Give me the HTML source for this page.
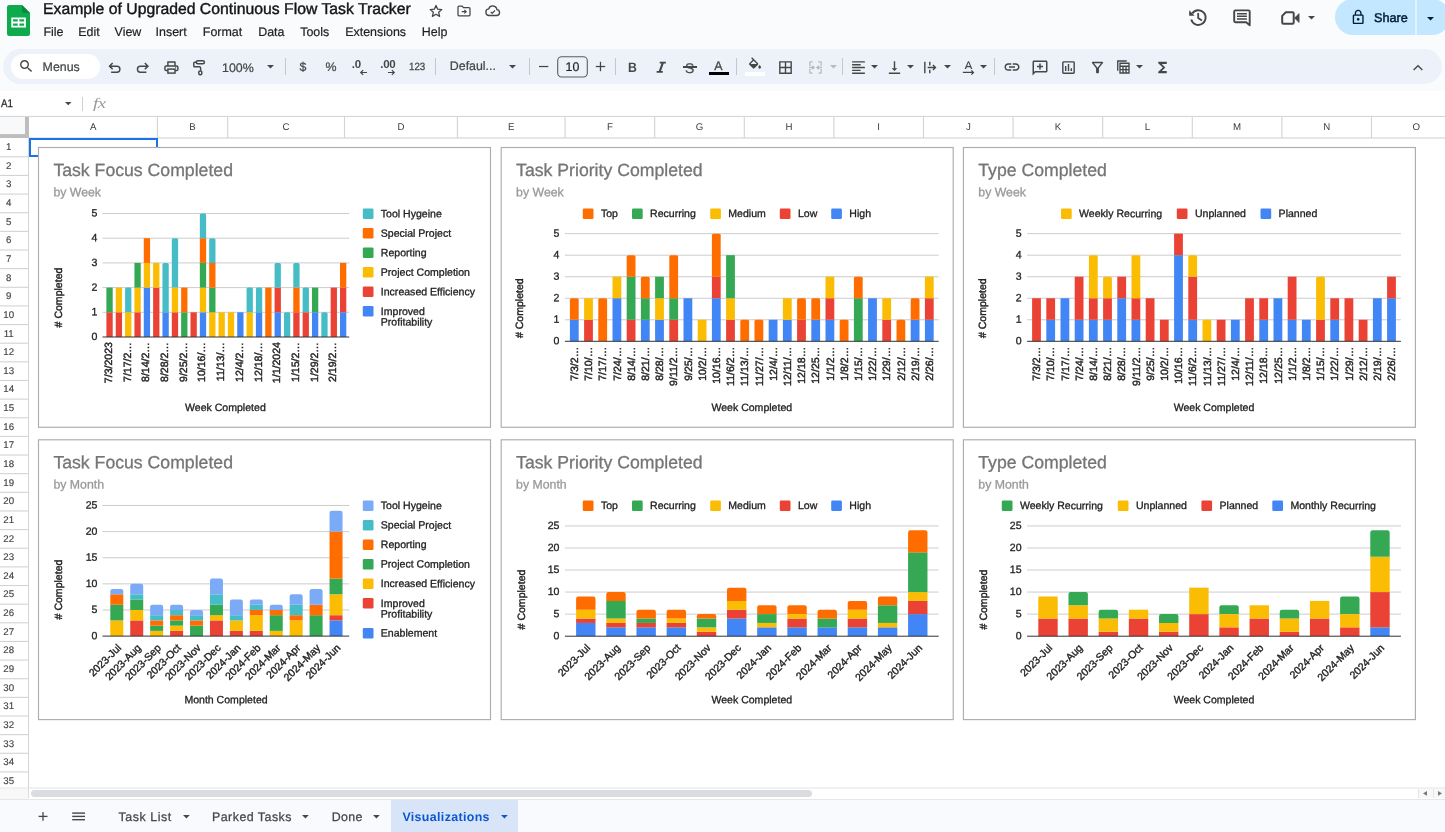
<!DOCTYPE html>
<html><head><meta charset="utf-8"><title>Example of Upgraded Continuous Flow Task Tracker</title>
<style>
html,body{margin:0;padding:0;background:#fff}
body{width:1445px;height:832px;position:relative;overflow:hidden;font-family:"Liberation Sans", sans-serif}
svg{display:block;overflow:visible}
svg text{font-family:"Liberation Sans", sans-serif;text-rendering:geometricPrecision}
div{text-rendering:geometricPrecision}
</style></head><body>
<div id="root" style="position:absolute;left:0;top:0;width:1445px;height:832px;will-change:transform;transform:translateZ(0)">
<div style="position:absolute;left:0;top:0;width:1445px;height:91px;background:#f9fbfd"></div>
<svg style="position:absolute;left:7px;top:5px" width="23" height="31" viewBox="0 0 23 31">
<path d="M2.2 0H15l8 8v20.8a2.2 2.2 0 0 1-2.2 2.2H2.2A2.2 2.2 0 0 1 0 28.800V2.2A2.200 2.200 0 0 1 2.200 0z" fill="#0dab4c"/>
<path d="M15 0l8 8h-5.800A2.200 2.200 0 0 1 15 5.800z" fill="#0a8a3f"/>
<path d="M4.300 12.400h14.600v10.200H4.300zM6.100 14.200v2.400h4.600v-2.400zM12.400 14.200v2.400h4.700v-2.400zM6.100 18.400v2.400h4.600v-2.400zM12.400 18.400v2.400h4.700v-2.400z" fill="#fff" fill-rule="evenodd"/>
</svg>
<div style="position:absolute;left:43px;top:1.32px;font-size:15.78px;line-height:18.131px;color:#151515;font-weight:400;white-space:nowrap;-webkit-text-stroke:0.400px #151515">Example of Upgraded Continuous Flow Task Tracker</div>
<svg style="position:absolute;left:427.9px;top:2.6px" width="16" height="16" viewBox="0 0 24 24" ><path d="M12 3.600l2.500 5.700 6.200.55-4.700 4.100 1.400 6.100L12 16.800 6.600 20.050l1.400-6.100-4.700-4.100 6.200-.55z" fill="none" stroke="#444746" stroke-width="1.900" stroke-linejoin="round"/></svg>
<svg style="position:absolute;left:456.3px;top:2.6px" width="16" height="16" viewBox="0 0 24 24" ><path d="M3 6.200a1.500 1.500 0 0 1 1.500-1.500h4.700l2 2.300h8.300A1.500 1.500 0 0 1 21 8.500v9.300a1.500 1.500 0 0 1-1.500 1.500h-15A1.500 1.500 0 0 1 3 17.800z" fill="none" stroke="#444746" stroke-width="1.900"/><path d="M8.500 13h6.500M12.600 10.300l2.700 2.700-2.700 2.700" fill="none" stroke="#444746" stroke-width="1.700"/></svg>
<svg style="position:absolute;left:483.85px;top:1.85px" width="17.5" height="17.5" viewBox="0 0 24 24" ><path d="M7 18.500a4.500 4.500 0 0 1-.6-8.950A5.800 5.800 0 0 1 17.700 10.500 4.050 4.050 0 0 1 18 18.500z" fill="none" stroke="#444746" stroke-width="1.800" stroke-linejoin="round"/><path d="M9.200 13.600l2 2 3.800-3.900" fill="none" stroke="#444746" stroke-width="1.700"/></svg>
<div style="position:absolute;left:43.5px;top:24.93px;font-size:12.45px;line-height:14.305px;color:#1f1f1f;font-weight:400;white-space:nowrap;-webkit-text-stroke:0.200px #1f1f1f">File</div>
<div style="position:absolute;left:78.2px;top:24.93px;font-size:12.45px;line-height:14.305px;color:#1f1f1f;font-weight:400;white-space:nowrap;-webkit-text-stroke:0.200px #1f1f1f">Edit</div>
<div style="position:absolute;left:114.6px;top:24.93px;font-size:12.45px;line-height:14.305px;color:#1f1f1f;font-weight:400;white-space:nowrap;-webkit-text-stroke:0.200px #1f1f1f">View</div>
<div style="position:absolute;left:155.6px;top:24.93px;font-size:12.45px;line-height:14.305px;color:#1f1f1f;font-weight:400;white-space:nowrap;-webkit-text-stroke:0.200px #1f1f1f">Insert</div>
<div style="position:absolute;left:202.8px;top:24.93px;font-size:12.45px;line-height:14.305px;color:#1f1f1f;font-weight:400;white-space:nowrap;-webkit-text-stroke:0.200px #1f1f1f">Format</div>
<div style="position:absolute;left:258.2px;top:24.93px;font-size:12.45px;line-height:14.305px;color:#1f1f1f;font-weight:400;white-space:nowrap;-webkit-text-stroke:0.200px #1f1f1f">Data</div>
<div style="position:absolute;left:300.2px;top:24.93px;font-size:12.45px;line-height:14.305px;color:#1f1f1f;font-weight:400;white-space:nowrap;-webkit-text-stroke:0.200px #1f1f1f">Tools</div>
<div style="position:absolute;left:345.2px;top:24.93px;font-size:12.45px;line-height:14.305px;color:#1f1f1f;font-weight:400;white-space:nowrap;-webkit-text-stroke:0.200px #1f1f1f">Extensions</div>
<div style="position:absolute;left:421.8px;top:24.93px;font-size:12.45px;line-height:14.305px;color:#1f1f1f;font-weight:400;white-space:nowrap;-webkit-text-stroke:0.200px #1f1f1f">Help</div>
<svg style="position:absolute;left:0;top:0" width="1445" height="40" viewBox="0 0 1445 40"><path d="M1192.32 13.41A7.3 7.3 0 1 1 1191.25 19.49" fill="none" stroke="#444746" stroke-width="1.9"/><path d="M1189.2 10.3V15.8H1194.6Z" fill="#444746"/><path d="M1198.2 12.9V18.1L1201.9 20.6" fill="none" stroke="#444746" stroke-width="1.8"/><path d="M1234.2 11.6Q1234.2 10.4 1235.4 10.4H1248.5Q1249.7 10.4 1249.7 11.600V25.200L1246.200 22.200H1235.400Q1234.200 22.200 1234.200 21Z" fill="none" stroke="#444746" stroke-width="1.9" stroke-linejoin="round"/><path d="M1237 13.700H1246.900M1237 16.300H1246.900M1237 18.900H1246.900" stroke="#444746" stroke-width="1.500"/><path d="M1285.800 12.300H1292.500Q1293.700 12.300 1293.700 13.500V22.600Q1293.700 23.800 1292.500 23.800H1283.400Q1282.200 23.800 1282.200 22.600V15.900Z" fill="none" stroke="#444746" stroke-width="2" stroke-linejoin="round"/><path d="M1294.500 18.050L1299.100 13.600V22.500Z" fill="#444746" stroke="#444746" stroke-width="0.600" stroke-linejoin="round"/></svg>
<svg style="position:absolute;left:1307.9px;top:16.05px" width="7" height="3.5" viewBox="0 0 10 5"><path d="M0 0h10L5 5z" fill="#444746"/></svg>
<div style="position:absolute;left:1335.400px;top:-0.600px;width:114.500px;height:36px;border-radius:18px;background:#c2e7ff"></div>
<div style="position:absolute;left:1415.400px;top:0;width:1.500px;height:35.400px;background:#e2f2ff"></div>
<svg style="position:absolute;left:1350.2px;top:8.8px" width="16.4" height="16.4" viewBox="0 0 24 24" ><path d="M18 8h-1V6c0-2.760-2.240-5-5-5S7 3.240 7 6v2H6c-1.100 0-2 .9-2 2v10c0 1.100.9 2 2 2h12c1.100 0 2-.9 2-2V10c0-1.100-.9-2-2-2zM9 6c0-1.660 1.340-3 3-3s3 1.340 3 3v2H9V6zm9 14H6V10h12v10zm-6-3c1.100 0 2-.9 2-2s-.9-2-2-2-2 .9-2 2 .9 2 2 2z" fill="#001d35"/></svg>
<div style="position:absolute;left:1374px;top:10.51px;font-size:12.7px;line-height:14.592px;color:#001d35;font-weight:400;white-space:nowrap;-webkit-text-stroke:0.450px #001d35">Share</div>
<svg style="position:absolute;left:1427.4px;top:16.65px" width="7" height="3.7" viewBox="0 0 10 5"><path d="M0 0h10L5 5z" fill="#001d35"/></svg>
<div style="position:absolute;left:3px;top:49px;width:1439px;height:35px;border-radius:17.500px;background:#edf2fa"></div>
<div style="position:absolute;left:11px;top:54px;width:88.500px;height:24.500px;border-radius:12.250px;background:#fff"></div>
<svg style="position:absolute;left:18.35px;top:58.35px" width="16.5" height="16.5" viewBox="0 0 24 24" ><path d="M15.500 14h-.79l-.28-.27A6.471 6.471 0 0 0 16 9.500 6.500 6.500 0 1 0 9.500 16c1.610 0 3.090-.59 4.230-1.570l.27.280v.79l5 4.990L20.490 19l-4.990-5zm-6 0C7.010 14 5 11.990 5 9.500S7.010 5 9.500 5 14 7.010 14 9.500 11.990 14 9.500 14z" fill="#444746"/></svg>
<div style="position:absolute;left:42.6px;top:59.98px;font-size:12.4px;line-height:14.248px;color:#444746;font-weight:400;white-space:nowrap;-webkit-text-stroke:0.220px #444746">Menus</div>
<svg style="position:absolute;left:0;top:0" width="1445" height="92" viewBox="0 0 1445 92"><path d="M112.65 63.1L109.45 66.3L112.65 69.15M109.6 66.3H116.95A2.95 2.95 0 0 1 116.95 72.2H111.1" fill="none" stroke="#444746" stroke-width="1.45" stroke-linejoin="round"/><path d="M144.8 63.1L148.05 66.3L144.8 69.15M147.9 66.3H140.4A2.95 2.95 0 0 0 140.4 72.2H146.4" fill="none" stroke="#444746" stroke-width="1.45" stroke-linejoin="round"/><path d="M167.9 65.9V62H175V65.9" fill="none" stroke="#444746" stroke-width="1.45" stroke-linejoin="round"/><rect x="164.9" y="66" width="13" height="4.5" rx="1.3" fill="none" stroke="#444746" stroke-width="1.45" stroke-linejoin="round"/><rect x="167.9" y="69.1" width="7.1" height="4" fill="#edf2fa" stroke="#444746" stroke-width="1.45"/><circle cx="175.7" cy="67.6" r="0.6" fill="#444746"/><rect x="196.3" y="60.8" width="8.1" height="3" rx="1.5" fill="none" stroke="#444746" stroke-width="1.45" stroke-linejoin="round"/><path d="M196.3 62.3H194.6Q193.8 62.3 193.8 63.1V66Q193.8 66.8 194.6 66.8H199.2Q200.65 66.8 200.65 68.3V70.6" fill="none" stroke="#444746" stroke-width="1.45" stroke-linejoin="round"/><rect x="198.8" y="70.9" width="3" height="3.8" rx="1.2" fill="none" stroke="#444746" stroke-width="1.45" stroke-linejoin="round"/></svg>
<div style="position:absolute;left:222px;top:60.98px;font-size:12.4px;line-height:14.248px;color:#444746;font-weight:400;white-space:nowrap;-webkit-text-stroke:0.220px #444746">100%</div>
<svg style="position:absolute;left:266.5px;top:64.85px" width="7" height="3.5" viewBox="0 0 10 5"><path d="M0 0h10L5 5z" fill="#444746"/></svg>
<div style="position:absolute;left:285px;top:58px;width:1px;height:17px;background:#c7c7c7"></div>
<div style="position:absolute;left:299.4px;top:60.08px;font-size:12.4px;line-height:14.248px;color:#444746;font-weight:400;white-space:nowrap;-webkit-text-stroke:0.220px #444746">$</div>
<div style="position:absolute;left:325.6px;top:60.08px;font-size:12.4px;line-height:14.248px;color:#444746;font-weight:400;white-space:nowrap;-webkit-text-stroke:0.220px #444746">%</div>
<div style="position:absolute;left:351.8px;top:59.09px;font-size:11.5px;line-height:13.213px;color:#444746;font-weight:700;white-space:nowrap;letter-spacing:-0.300px">.0</div>
<svg style="position:absolute;left:360.1px;top:68.6px" width="7" height="7" viewBox="0 0 10 10" ><path d="M10 5H1.500M4.500 1.500L1 5l3.500 3.500" fill="none" stroke="#444746" stroke-width="1.700"/></svg>
<div style="position:absolute;left:380.3px;top:59.09px;font-size:11.5px;line-height:13.213px;color:#444746;font-weight:700;white-space:nowrap;letter-spacing:-0.300px">.00</div>
<svg style="position:absolute;left:388px;top:68.5px" width="7" height="7" viewBox="0 0 10 10" ><path d="M0 5h8.500M5.500 1.500L9 5 5.500 8.500" fill="none" stroke="#444746" stroke-width="1.700"/></svg>
<div style="position:absolute;left:409px;top:61.2px;font-size:10.5px;line-height:12.065px;color:#444746;font-weight:400;white-space:nowrap;-webkit-text-stroke:0.250px #444746;transform:scaleX(0.930);transform-origin:0 0">123</div>
<div style="position:absolute;left:434.9px;top:58px;width:1px;height:17px;background:#c7c7c7"></div>
<div style="position:absolute;left:449.8px;top:59.48px;font-size:12.4px;line-height:14.248px;color:#444746;font-weight:400;white-space:nowrap;-webkit-text-stroke:0.220px #444746">Defaul...</div>
<svg style="position:absolute;left:508.5px;top:64.85px" width="7" height="3.5" viewBox="0 0 10 5"><path d="M0 0h10L5 5z" fill="#444746"/></svg>
<div style="position:absolute;left:529px;top:58px;width:1px;height:17px;background:#c7c7c7"></div>
<svg style="position:absolute;left:0;top:50px" width="700" height="34" viewBox="0 50 700 34"><rect x="539" y="65.9" width="9.3" height="1.25" fill="#444746"/><rect x="595.8" y="65.9" width="9.4" height="1.25" fill="#444746"/><rect x="599.85" y="61.800" width="1.25" height="9.400" fill="#444746"/><rect x="557.700" y="56.700" width="29.600" height="20.300" rx="4" fill="none" stroke="#5a5c5b" stroke-width="1.100"/></svg>
<div style="position:absolute;left:565.6px;top:60.08px;font-size:12.4px;line-height:14.248px;color:#1f1f1f;font-weight:400;white-space:nowrap;-webkit-text-stroke:0.200px #1f1f1f">10</div>
<div style="position:absolute;left:614.9px;top:58px;width:1px;height:17px;background:#c7c7c7"></div>
<div style="position:absolute;left:628.2px;top:59.69px;font-size:13.6px;line-height:15.626px;color:#444746;font-weight:700;white-space:nowrap;transform:scaleX(0.900);transform-origin:0 0">B</div>
<svg style="position:absolute;left:652.05px;top:58.25px" width="18.5" height="18.5" viewBox="0 0 24 24" ><path d="M10 5v2.200h2.300l-3.500 9.600H6V19h8v-2.200h-2.300l3.500-9.600H18V5z" fill="#444746"/></svg>
<div style="position:absolute;left:685px;top:59.73px;font-size:14px;line-height:16.086px;color:#444746;font-weight:400;white-space:nowrap;-webkit-text-stroke:0.200px #444746">S</div>
<div style="position:absolute;left:682.800px;top:66.300px;width:14px;height:1.300px;background:#444746"></div>
<div style="position:absolute;left:714.3px;top:58.98px;font-size:12.4px;line-height:14.248px;color:#444746;font-weight:400;white-space:nowrap;-webkit-text-stroke:0.300px #444746">A</div>
<div style="position:absolute;left:708.600px;top:71.800px;width:20.700px;height:3.600px;background:#000"></div>
<div style="position:absolute;left:736.3px;top:58px;width:1px;height:17px;background:#c7c7c7"></div>
<svg style="position:absolute;left:746.6px;top:55.6px" width="16" height="16" viewBox="0 0 24 24" ><path d="M16.560 8.940L7.620 0 6.210 1.410l2.380 2.380-5.150 5.150a1.490 1.490 0 0 0 0 2.120l5.500 5.500c.29.290.68.440 1.060.440s.77-.150 1.060-.440l5.500-5.500c.59-.58.59-1.530 0-2.120zM5.210 10L10 5.210 14.790 10H5.210zM19 11.500s-2 2.170-2 3.500c0 1.100.9 2 2 2s2-.9 2-2c0-1.330-2-3.500-2-3.500z" fill="#444746" transform="translate(0 2)"/></svg>
<div style="position:absolute;left:745px;top:72px;width:20.200px;height:3.500px;background:#fff"></div>
<svg style="position:absolute;left:776.5px;top:58.5px" width="17" height="17" viewBox="0 0 24 24" ><path d="M3 3v18h18V3H3zm8 16H5v-6h6v6zm0-8H5V5h6v6zm8 8h-6v-6h6v6zm0-8h-6V5h6v6z" fill="#444746"/></svg>
<svg style="position:absolute;left:806.5px;top:58.5px" width="17" height="17" viewBox="0 0 24 24" ><path d="M4 4v6M4 14v6M20 4v6M20 14v6M4 4h4M16 4h4M4 20h4M16 20h4M3 12h7M7.500 9.500L10 12l-2.500 2.500M21 12h-7M16.500 9.500L14 12l2.500 2.500" fill="none" stroke="#b6b9bd" stroke-width="1.800"/></svg>
<svg style="position:absolute;left:829.5px;top:64.85px" width="7" height="3.5" viewBox="0 0 10 5"><path d="M0 0h10L5 5z" fill="#b6b9bd"/></svg>
<div style="position:absolute;left:841.9px;top:58px;width:1px;height:17px;background:#c7c7c7"></div>
<svg style="position:absolute;left:849.5px;top:58.5px" width="17" height="17" viewBox="0 0 24 24" ><path d="M3 21h18v-2H3v2zm0-4h12v-2H3v2zm0-4h18v-2H3v2zm0-4h12V7H3v2zm0-6v2h18V3H3z" fill="#444746"/></svg>
<svg style="position:absolute;left:870.9px;top:64.85px" width="7" height="3.5" viewBox="0 0 10 5"><path d="M0 0h10L5 5z" fill="#444746"/></svg>
<svg style="position:absolute;left:886.1px;top:58.5px" width="17" height="17" viewBox="0 0 24 24" ><path d="M16 13h-3V3h-2v10H8l4 4 4-4zM4 19v2h16v-2H4z" fill="#444746"/></svg>
<svg style="position:absolute;left:907.1px;top:64.85px" width="7" height="3.5" viewBox="0 0 10 5"><path d="M0 0h10L5 5z" fill="#444746"/></svg>
<svg style="position:absolute;left:921.5px;top:58.5px" width="17" height="17" viewBox="0 0 24 24" ><path d="M4 4v16M11 4v5M11 15v5M8 12h11M15.500 8.500L19 12l-3.500 3.500" fill="none" stroke="#444746" stroke-width="2"/></svg>
<svg style="position:absolute;left:943.5px;top:64.85px" width="7" height="3.5" viewBox="0 0 10 5"><path d="M0 0h10L5 5z" fill="#444746"/></svg>
<svg style="position:absolute;left:959.5px;top:58.5px" width="17" height="17" viewBox="0 0 24 24" ><path d="M12.750 3h-1.500L6.500 14h2.100l.9-2.200h5l.9 2.200h2.100L12.750 3zm-2.620 7L12 4.980 13.870 10h-3.740z" fill="#444746"/><path d="M4 19h15M16 16l3 3-3 3" fill="none" stroke="#444746" stroke-width="1.800"/></svg>
<svg style="position:absolute;left:980px;top:64.85px" width="7" height="3.5" viewBox="0 0 10 5"><path d="M0 0h10L5 5z" fill="#444746"/></svg>
<div style="position:absolute;left:993.9px;top:58px;width:1px;height:17px;background:#c7c7c7"></div>
<svg style="position:absolute;left:1002.8px;top:58px" width="18" height="18" viewBox="0 0 24 24" ><path d="M3.900 12c0-1.710 1.390-3.100 3.100-3.100h4V7H7c-2.760 0-5 2.240-5 5s2.240 5 5 5h4v-1.900H7c-1.710 0-3.100-1.390-3.100-3.100zM8 13h8v-2H8v2zm9-6h-4v1.900h4c1.710 0 3.100 1.390 3.100 3.100s-1.390 3.100-3.100 3.100h-4V17h4c2.760 0 5-2.240 5-5s-2.240-5-5-5z" fill="#444746"/></svg>
<svg style="position:absolute;left:1031px;top:58.6px" width="18" height="18" viewBox="0 0 24 24" ><path d="M20 2H4c-1.100 0-2 .9-2 2v18l4-4h14c1.100 0 2-.9 2-2V4c0-1.100-.9-2-2-2zm0 14H5.170L4 17.170V4h16v12zM11 14h2v-3h3V9h-3V6h-2v3H8v2h3z" fill="#444746"/></svg>
<svg style="position:absolute;left:1059.9px;top:58.5px" width="17" height="17" viewBox="0 0 24 24" ><path d="M19 3H5c-1.100 0-2 .9-2 2v14c0 1.100.9 2 2 2h14c1.100 0 2-.9 2-2V5c0-1.100-.9-2-2-2zm0 16H5V5h14v14zM7 10h2v7H7zm4-3h2v10h-2zm4 6h2v4h-2z" fill="#444746"/></svg>
<svg style="position:absolute;left:1088.5px;top:58.7px" width="17" height="17" viewBox="0 0 24 24" ><path d="M4.250 5.610C6.270 8.200 10 13 10 13v6c0 .55.45 1 1 1h2c.55 0 1-.45 1-1v-6s3.720-4.800 5.740-7.390A.998.998 0 0 0 18.950 4H5.040a1 1 0 0 0-.79 1.610zM7.040 6h9.920L12 12.320 7.040 6z" fill="#444746" transform="translate(0 0)"/></svg>
<svg style="position:absolute;left:1114px;top:58.2px" width="18" height="18" viewBox="0 0 24 24" ><path d="M8 7h12v13H8zM8 11h12M8 15.500h12M12 11v9M16 11v9" fill="none" stroke="#444746" stroke-width="1.800"/><path d="M5 17V4h12" fill="none" stroke="#444746" stroke-width="1.800"/></svg>
<svg style="position:absolute;left:1136.1px;top:64.85px" width="7" height="3.5" viewBox="0 0 10 5"><path d="M0 0h10L5 5z" fill="#444746"/></svg>
<svg style="position:absolute;left:1153.5px;top:58.5px" width="17" height="17" viewBox="0 0 24 24" ><path d="M18 4H6v2l6.500 6L6 18v2h12v-3h-7l5-5-5-5h7V4z" fill="#444746"/></svg>
<svg style="position:absolute;left:1410.6px;top:60.6px" width="14" height="14" viewBox="0 0 24 24" ><path d="M4.500 15.500L12 8l7.500 7.500" fill="none" stroke="#444746" stroke-width="2.300"/></svg>
<div style="position:absolute;left:0;top:91px;width:1445px;height:25.500px;background:#fff"></div>
<div style="position:absolute;left:0.8px;top:98.25px;font-size:11px;line-height:12.639px;color:#1f1f1f;font-weight:400;white-space:nowrap;transform:scaleX(0.890);transform-origin:0 0;-webkit-text-stroke:0.250px #1f1f1f">A1</div>
<svg style="position:absolute;left:65.05px;top:102.05px" width="6.5" height="3.3" viewBox="0 0 10 5"><path d="M0 0h10L5 5z" fill="#444746"/></svg>
<div style="position:absolute;left:82px;top:97px;width:1px;height:14px;background:#d0d0d0"></div>
<div style="position:absolute;left:93.2px;top:95.88px;font-size:14.5px;line-height:16.660px;color:#959ba1;font-weight:400;white-space:nowrap;font-family:'Liberation Serif',serif;letter-spacing:-0.300px;transform:scaleX(1.300);transform-origin:0 0"><i>fx</i></div>
<div style="position:absolute;left:0;top:117px;width:1445px;height:21px;background:#fff"></div>
<div style="position:absolute;left:83.2px;top:122.300px;width:20px;text-align:center;font-size:9.700px;line-height:12px;color:#3c4043">A</div>
<div style="position:absolute;left:182.55px;top:122.300px;width:20px;text-align:center;font-size:9.700px;line-height:12px;color:#3c4043">B</div>
<div style="position:absolute;left:276.1px;top:122.300px;width:20px;text-align:center;font-size:9.700px;line-height:12px;color:#3c4043">C</div>
<div style="position:absolute;left:390.95px;top:122.300px;width:20px;text-align:center;font-size:9.700px;line-height:12px;color:#3c4043">D</div>
<div style="position:absolute;left:501.25px;top:122.300px;width:20px;text-align:center;font-size:9.700px;line-height:12px;color:#3c4043">E</div>
<div style="position:absolute;left:599.9px;top:122.300px;width:20px;text-align:center;font-size:9.700px;line-height:12px;color:#3c4043">F</div>
<div style="position:absolute;left:689.5px;top:122.300px;width:20px;text-align:center;font-size:9.700px;line-height:12px;color:#3c4043">G</div>
<div style="position:absolute;left:779.1px;top:122.300px;width:20px;text-align:center;font-size:9.700px;line-height:12px;color:#3c4043">H</div>
<div style="position:absolute;left:868.7px;top:122.300px;width:20px;text-align:center;font-size:9.700px;line-height:12px;color:#3c4043">I</div>
<div style="position:absolute;left:958.3px;top:122.300px;width:20px;text-align:center;font-size:9.700px;line-height:12px;color:#3c4043">J</div>
<div style="position:absolute;left:1047.9px;top:122.300px;width:20px;text-align:center;font-size:9.700px;line-height:12px;color:#3c4043">K</div>
<div style="position:absolute;left:1137.5px;top:122.300px;width:20px;text-align:center;font-size:9.700px;line-height:12px;color:#3c4043">L</div>
<div style="position:absolute;left:1227.1px;top:122.300px;width:20px;text-align:center;font-size:9.700px;line-height:12px;color:#3c4043">M</div>
<div style="position:absolute;left:1316.7px;top:122.300px;width:20px;text-align:center;font-size:9.700px;line-height:12px;color:#3c4043">N</div>
<div style="position:absolute;left:1406.3px;top:122.300px;width:20px;text-align:center;font-size:9.700px;line-height:12px;color:#3c4043">O</div>
<svg style="position:absolute;left:0;top:0" width="1445" height="140" viewBox="0 0 1445 140"><rect x="0" y="115.9" width="1445" height="1.1" fill="#d6d6d6"/><rect x="29" y="137.45" width="1416" height="1.1" fill="#d3d3d3"/><rect x="0" y="117" width="29" height="21" fill="#bdbdbd"/><rect x="0" y="117" width="25" height="17.1" fill="#f8f9fa"/><rect x="156.85" y="117" width="1.1" height="21" fill="#d3d3d3"/><rect x="227.15" y="117" width="1.1" height="21" fill="#d3d3d3"/><rect x="343.95" y="117" width="1.1" height="21" fill="#d3d3d3"/><rect x="456.85" y="117" width="1.1" height="21" fill="#d3d3d3"/><rect x="564.55" y="117" width="1.1" height="21" fill="#d3d3d3"/><rect x="654.15" y="117" width="1.1" height="21" fill="#d3d3d3"/><rect x="743.75" y="117" width="1.1" height="21" fill="#d3d3d3"/><rect x="833.35" y="117" width="1.1" height="21" fill="#d3d3d3"/><rect x="922.95" y="117" width="1.1" height="21" fill="#d3d3d3"/><rect x="1012.55" y="117" width="1.1" height="21" fill="#d3d3d3"/><rect x="1102.15" y="117" width="1.1" height="21" fill="#d3d3d3"/><rect x="1191.75" y="117" width="1.1" height="21" fill="#d3d3d3"/><rect x="1281.35" y="117" width="1.1" height="21" fill="#d3d3d3"/><rect x="1370.95" y="117" width="1.1" height="21" fill="#d3d3d3"/></svg>
<div style="position:absolute;left:28.300px;top:138px;width:1px;height:650px;background:#d5d5d5"></div>
<div style="position:absolute;left:-1.300px;top:142.1px;width:20px;text-align:center;font-size:9.700px;line-height:12px;color:#444;-webkit-text-stroke:0.150px #444">1</div>
<div style="position:absolute;left:-1.300px;top:160.74px;width:20px;text-align:center;font-size:9.700px;line-height:12px;color:#444;-webkit-text-stroke:0.150px #444">2</div>
<div style="position:absolute;left:-1.300px;top:179.38px;width:20px;text-align:center;font-size:9.700px;line-height:12px;color:#444;-webkit-text-stroke:0.150px #444">3</div>
<div style="position:absolute;left:-1.300px;top:198.02px;width:20px;text-align:center;font-size:9.700px;line-height:12px;color:#444;-webkit-text-stroke:0.150px #444">4</div>
<div style="position:absolute;left:-1.300px;top:216.66px;width:20px;text-align:center;font-size:9.700px;line-height:12px;color:#444;-webkit-text-stroke:0.150px #444">5</div>
<div style="position:absolute;left:-1.300px;top:235.3px;width:20px;text-align:center;font-size:9.700px;line-height:12px;color:#444;-webkit-text-stroke:0.150px #444">6</div>
<div style="position:absolute;left:-1.300px;top:253.94px;width:20px;text-align:center;font-size:9.700px;line-height:12px;color:#444;-webkit-text-stroke:0.150px #444">7</div>
<div style="position:absolute;left:-1.300px;top:272.58px;width:20px;text-align:center;font-size:9.700px;line-height:12px;color:#444;-webkit-text-stroke:0.150px #444">8</div>
<div style="position:absolute;left:-1.300px;top:291.22px;width:20px;text-align:center;font-size:9.700px;line-height:12px;color:#444;-webkit-text-stroke:0.150px #444">9</div>
<div style="position:absolute;left:-1.300px;top:309.86px;width:20px;text-align:center;font-size:9.700px;line-height:12px;color:#444;-webkit-text-stroke:0.150px #444">10</div>
<div style="position:absolute;left:-1.300px;top:328.5px;width:20px;text-align:center;font-size:9.700px;line-height:12px;color:#444;-webkit-text-stroke:0.150px #444">11</div>
<div style="position:absolute;left:-1.300px;top:347.14px;width:20px;text-align:center;font-size:9.700px;line-height:12px;color:#444;-webkit-text-stroke:0.150px #444">12</div>
<div style="position:absolute;left:-1.300px;top:365.78px;width:20px;text-align:center;font-size:9.700px;line-height:12px;color:#444;-webkit-text-stroke:0.150px #444">13</div>
<div style="position:absolute;left:-1.300px;top:384.42px;width:20px;text-align:center;font-size:9.700px;line-height:12px;color:#444;-webkit-text-stroke:0.150px #444">14</div>
<div style="position:absolute;left:-1.300px;top:403.06px;width:20px;text-align:center;font-size:9.700px;line-height:12px;color:#444;-webkit-text-stroke:0.150px #444">15</div>
<div style="position:absolute;left:-1.300px;top:421.7px;width:20px;text-align:center;font-size:9.700px;line-height:12px;color:#444;-webkit-text-stroke:0.150px #444">16</div>
<div style="position:absolute;left:-1.300px;top:440.34px;width:20px;text-align:center;font-size:9.700px;line-height:12px;color:#444;-webkit-text-stroke:0.150px #444">17</div>
<div style="position:absolute;left:-1.300px;top:458.98px;width:20px;text-align:center;font-size:9.700px;line-height:12px;color:#444;-webkit-text-stroke:0.150px #444">18</div>
<div style="position:absolute;left:-1.300px;top:477.62px;width:20px;text-align:center;font-size:9.700px;line-height:12px;color:#444;-webkit-text-stroke:0.150px #444">19</div>
<div style="position:absolute;left:-1.300px;top:496.26px;width:20px;text-align:center;font-size:9.700px;line-height:12px;color:#444;-webkit-text-stroke:0.150px #444">20</div>
<div style="position:absolute;left:-1.300px;top:514.9px;width:20px;text-align:center;font-size:9.700px;line-height:12px;color:#444;-webkit-text-stroke:0.150px #444">21</div>
<div style="position:absolute;left:-1.300px;top:533.54px;width:20px;text-align:center;font-size:9.700px;line-height:12px;color:#444;-webkit-text-stroke:0.150px #444">22</div>
<div style="position:absolute;left:-1.300px;top:552.18px;width:20px;text-align:center;font-size:9.700px;line-height:12px;color:#444;-webkit-text-stroke:0.150px #444">23</div>
<div style="position:absolute;left:-1.300px;top:570.82px;width:20px;text-align:center;font-size:9.700px;line-height:12px;color:#444;-webkit-text-stroke:0.150px #444">24</div>
<div style="position:absolute;left:-1.300px;top:589.46px;width:20px;text-align:center;font-size:9.700px;line-height:12px;color:#444;-webkit-text-stroke:0.150px #444">25</div>
<div style="position:absolute;left:-1.300px;top:608.1px;width:20px;text-align:center;font-size:9.700px;line-height:12px;color:#444;-webkit-text-stroke:0.150px #444">26</div>
<div style="position:absolute;left:-1.300px;top:626.74px;width:20px;text-align:center;font-size:9.700px;line-height:12px;color:#444;-webkit-text-stroke:0.150px #444">27</div>
<div style="position:absolute;left:-1.300px;top:645.38px;width:20px;text-align:center;font-size:9.700px;line-height:12px;color:#444;-webkit-text-stroke:0.150px #444">28</div>
<div style="position:absolute;left:-1.300px;top:664.02px;width:20px;text-align:center;font-size:9.700px;line-height:12px;color:#444;-webkit-text-stroke:0.150px #444">29</div>
<div style="position:absolute;left:-1.300px;top:682.66px;width:20px;text-align:center;font-size:9.700px;line-height:12px;color:#444;-webkit-text-stroke:0.150px #444">30</div>
<div style="position:absolute;left:-1.300px;top:701.3px;width:20px;text-align:center;font-size:9.700px;line-height:12px;color:#444;-webkit-text-stroke:0.150px #444">31</div>
<div style="position:absolute;left:-1.300px;top:719.94px;width:20px;text-align:center;font-size:9.700px;line-height:12px;color:#444;-webkit-text-stroke:0.150px #444">32</div>
<div style="position:absolute;left:-1.300px;top:738.58px;width:20px;text-align:center;font-size:9.700px;line-height:12px;color:#444;-webkit-text-stroke:0.150px #444">33</div>
<div style="position:absolute;left:-1.300px;top:757.22px;width:20px;text-align:center;font-size:9.700px;line-height:12px;color:#444;-webkit-text-stroke:0.150px #444">34</div>
<div style="position:absolute;left:-1.300px;top:775.86px;width:20px;text-align:center;font-size:9.700px;line-height:12px;color:#444;-webkit-text-stroke:0.150px #444">35</div>
<svg style="position:absolute;left:0;top:0" width="30" height="800" viewBox="0 0 30 800"><rect x="0" y="156.25" width="28.5" height="1.1" fill="#d3d3d3"/><rect x="0" y="174.89" width="28.5" height="1.1" fill="#d3d3d3"/><rect x="0" y="193.53" width="28.5" height="1.1" fill="#d3d3d3"/><rect x="0" y="212.17" width="28.5" height="1.1" fill="#d3d3d3"/><rect x="0" y="230.81" width="28.5" height="1.1" fill="#d3d3d3"/><rect x="0" y="249.45" width="28.5" height="1.1" fill="#d3d3d3"/><rect x="0" y="268.09" width="28.5" height="1.1" fill="#d3d3d3"/><rect x="0" y="286.73" width="28.5" height="1.1" fill="#d3d3d3"/><rect x="0" y="305.37" width="28.5" height="1.1" fill="#d3d3d3"/><rect x="0" y="324.01" width="28.5" height="1.1" fill="#d3d3d3"/><rect x="0" y="342.65" width="28.5" height="1.1" fill="#d3d3d3"/><rect x="0" y="361.29" width="28.5" height="1.1" fill="#d3d3d3"/><rect x="0" y="379.93" width="28.5" height="1.1" fill="#d3d3d3"/><rect x="0" y="398.57" width="28.5" height="1.1" fill="#d3d3d3"/><rect x="0" y="417.21" width="28.5" height="1.1" fill="#d3d3d3"/><rect x="0" y="435.85" width="28.5" height="1.1" fill="#d3d3d3"/><rect x="0" y="454.49" width="28.5" height="1.1" fill="#d3d3d3"/><rect x="0" y="473.13" width="28.5" height="1.1" fill="#d3d3d3"/><rect x="0" y="491.77" width="28.5" height="1.1" fill="#d3d3d3"/><rect x="0" y="510.41" width="28.5" height="1.1" fill="#d3d3d3"/><rect x="0" y="529.05" width="28.5" height="1.1" fill="#d3d3d3"/><rect x="0" y="547.69" width="28.5" height="1.1" fill="#d3d3d3"/><rect x="0" y="566.33" width="28.5" height="1.1" fill="#d3d3d3"/><rect x="0" y="584.97" width="28.5" height="1.1" fill="#d3d3d3"/><rect x="0" y="603.61" width="28.5" height="1.1" fill="#d3d3d3"/><rect x="0" y="622.25" width="28.5" height="1.1" fill="#d3d3d3"/><rect x="0" y="640.89" width="28.5" height="1.1" fill="#d3d3d3"/><rect x="0" y="659.53" width="28.5" height="1.1" fill="#d3d3d3"/><rect x="0" y="678.17" width="28.5" height="1.1" fill="#d3d3d3"/><rect x="0" y="696.81" width="28.5" height="1.1" fill="#d3d3d3"/><rect x="0" y="715.45" width="28.5" height="1.1" fill="#d3d3d3"/><rect x="0" y="734.09" width="28.5" height="1.1" fill="#d3d3d3"/><rect x="0" y="752.73" width="28.5" height="1.1" fill="#d3d3d3"/><rect x="0" y="771.37" width="28.5" height="1.1" fill="#d3d3d3"/><rect x="0" y="790.01" width="28.5" height="1.1" fill="#d3d3d3"/></svg>
<div style="position:absolute;left:28.800px;top:137.700px;width:129.200px;height:19.500px;border:2px solid #1a73e8;box-sizing:border-box"></div>
<div style="position:absolute;left:0;top:787px;width:1445px;height:12.500px;background:#fff"></div>
<div style="position:absolute;left:0;top:787px;width:28.500px;height:12px;background:#f8f8f8"></div>
<div style="position:absolute;left:0;top:787px;width:1445px;height:2px;background:#f1f1f1"></div>
<div style="position:absolute;left:28.200px;top:787px;width:1.300px;height:11px;background:#dcdcdc"></div>
<div style="position:absolute;left:31.100px;top:790px;width:781.400px;height:7px;border-radius:3.500px;background:#dadce0"></div>
<div style="position:absolute;left:1418.400px;top:788.700px;width:26.600px;height:9.500px;background:#f8f8f8"></div>
<div style="position:absolute;left:1418px;top:788.700px;width:1px;height:9.500px;background:#e6e6e6"></div><div style="position:absolute;left:1432.500px;top:788.700px;width:1.300px;height:9.500px;background:#e6e6e6"></div>
<svg style="position:absolute;left:1423.200px;top:791px;width:4px;height:4.800px" viewBox="0 0 4 6" preserveAspectRatio="none"><path d="M4 0v6L0 3z" fill="#777"/></svg>
<svg style="position:absolute;left:1438.200px;top:791px;width:4px;height:4.800px" viewBox="0 0 4 6" preserveAspectRatio="none"><path d="M0 0v6l4-3z" fill="#777"/></svg>
<div style="position:absolute;left:0;top:799.500px;width:1445px;height:33px;background:#f8fafd"></div>
<div style="position:absolute;left:0;top:798.800px;width:1445px;height:1.200px;background:#e4e6e8"></div>
<div style="position:absolute;left:391.100px;top:799.800px;width:126.800px;height:32.500px;background:#d8e4f7"></div>
<svg style="position:absolute;left:30px;top:805px" width="70" height="25" viewBox="30 805 70 25"><rect x="38.600" y="815.750" width="8.900" height="1.300" fill="#444746"/><rect x="42.350" y="812.100" width="1.300" height="8.700" fill="#444746"/><rect x="72.200" y="812.400" width="12.800" height="1.400" fill="#444746"/><rect x="72.200" y="815.700" width="12.800" height="1.400" fill="#444746"/><rect x="72.200" y="819" width="12.800" height="1.400" fill="#444746"/></svg>
<div style="position:absolute;left:118.6px;top:810.18px;font-size:12.4px;line-height:14.248px;color:#444746;font-weight:400;white-space:nowrap;-webkit-text-stroke:0.250px #444746;letter-spacing:0.550px">Task List</div>
<svg style="position:absolute;left:182.6px;top:815.3px" width="6.8" height="3.4" viewBox="0 0 10 5"><path d="M0 0h10L5 5z" fill="#444746"/></svg>
<div style="position:absolute;left:212px;top:810.18px;font-size:12.4px;line-height:14.248px;color:#444746;font-weight:400;white-space:nowrap;-webkit-text-stroke:0.250px #444746;letter-spacing:0.480px">Parked Tasks</div>
<svg style="position:absolute;left:302.2px;top:815.3px" width="6.8" height="3.4" viewBox="0 0 10 5"><path d="M0 0h10L5 5z" fill="#444746"/></svg>
<div style="position:absolute;left:331.7px;top:810.18px;font-size:12.4px;line-height:14.248px;color:#444746;font-weight:400;white-space:nowrap;-webkit-text-stroke:0.250px #444746;letter-spacing:0.400px">Done</div>
<svg style="position:absolute;left:373.1px;top:815.3px" width="6.8" height="3.4" viewBox="0 0 10 5"><path d="M0 0h10L5 5z" fill="#444746"/></svg>
<div style="position:absolute;left:402.4px;top:810.18px;font-size:12.4px;line-height:14.248px;color:#0b57d0;font-weight:700;white-space:nowrap;letter-spacing:0.360px">Visualizations</div>
<svg style="position:absolute;left:500.6px;top:815.3px" width="6.8" height="3.4" viewBox="0 0 10 5"><path d="M0 0h10L5 5z" fill="#0b57d0"/></svg>
<svg width="1445" height="832" viewBox="0 0 1445 832" style="position:absolute;left:0;top:0" font-family='"Liberation Sans", sans-serif'>
<rect x="38.5" y="147.5" width="452" height="279.8" fill="#fff" stroke="#adadad" stroke-width="1.15"/>
<text transform="translate(53.4 175.9) rotate(0.03)" font-size="17.67" fill="#757575" stroke="#757575" stroke-width="0.3">Task Focus Completed</text>
<text transform="translate(53.4 196.3) rotate(0.03)" font-size="12.3" fill="#999" stroke="#999" stroke-width="0.3">by Week</text>
<text transform="translate(97.4 340.05) rotate(0.03)" font-size="10.55" fill="#222" stroke="#222" stroke-width="0.3" text-anchor="end">0</text>
<rect x="102.5" y="311.8" width="246.7" height="1" fill="#ccc"/>
<text transform="translate(97.4 315.35) rotate(0.03)" font-size="10.55" fill="#222" stroke="#222" stroke-width="0.3" text-anchor="end">1</text>
<rect x="102.5" y="287.1" width="246.7" height="1" fill="#ccc"/>
<text transform="translate(97.4 290.65) rotate(0.03)" font-size="10.55" fill="#222" stroke="#222" stroke-width="0.3" text-anchor="end">2</text>
<rect x="102.5" y="262.4" width="246.7" height="1" fill="#ccc"/>
<text transform="translate(97.4 265.95) rotate(0.03)" font-size="10.55" fill="#222" stroke="#222" stroke-width="0.3" text-anchor="end">3</text>
<rect x="102.5" y="237.7" width="246.7" height="1" fill="#ccc"/>
<text transform="translate(97.4 241.25) rotate(0.03)" font-size="10.55" fill="#222" stroke="#222" stroke-width="0.3" text-anchor="end">4</text>
<rect x="102.5" y="213" width="246.7" height="1" fill="#ccc"/>
<text transform="translate(97.4 216.55) rotate(0.03)" font-size="10.55" fill="#222" stroke="#222" stroke-width="0.3" text-anchor="end">5</text>
<rect x="106.4" y="312.3" width="6.3" height="24.7" fill="#ea4335"/>
<rect x="106.4" y="287.6" width="6.3" height="24.7" fill="#34a853"/>
<rect x="115.74" y="312.3" width="6.3" height="24.7" fill="#ea4335"/>
<rect x="115.74" y="287.6" width="6.3" height="24.7" fill="#fbbc04"/>
<rect x="125.09" y="312.3" width="6.3" height="24.7" fill="#fbbc04"/>
<path d="M125.09 312.3V289.1Q125.09 287.6 126.59 287.6H129.89Q131.39 287.6 131.39 289.1V312.3Z" fill="#46bdc6"/>
<rect x="134.43" y="312.3" width="6.3" height="24.7" fill="#ea4335"/>
<rect x="134.43" y="287.6" width="6.3" height="24.7" fill="#fbbc04"/>
<rect x="134.43" y="262.9" width="6.3" height="24.7" fill="#34a853"/>
<rect x="143.78" y="287.6" width="6.3" height="49.4" fill="#4285f4"/>
<rect x="143.78" y="262.9" width="6.3" height="24.7" fill="#fbbc04"/>
<rect x="143.78" y="238.2" width="6.3" height="24.7" fill="#ff6d01"/>
<rect x="153.12" y="287.6" width="6.3" height="49.4" fill="#ea4335"/>
<rect x="153.12" y="262.9" width="6.3" height="24.7" fill="#fbbc04"/>
<rect x="162.46" y="312.3" width="6.3" height="24.7" fill="#4285f4"/>
<path d="M162.46 312.3V264.4Q162.46 262.9 163.96 262.9H167.26Q168.76 262.9 168.76 264.4V312.3Z" fill="#46bdc6"/>
<rect x="171.81" y="312.3" width="6.3" height="24.7" fill="#ea4335"/>
<rect x="171.81" y="287.6" width="6.3" height="24.7" fill="#fbbc04"/>
<path d="M171.81 287.6V239.7Q171.81 238.2 173.31 238.2H176.61Q178.11 238.2 178.11 239.7V287.6Z" fill="#46bdc6"/>
<rect x="181.15" y="312.3" width="6.3" height="24.7" fill="#34a853"/>
<rect x="181.15" y="287.6" width="6.3" height="24.7" fill="#ff6d01"/>
<rect x="190.5" y="312.3" width="6.3" height="24.7" fill="#ea4335"/>
<rect x="199.84" y="312.3" width="6.3" height="24.7" fill="#4285f4"/>
<rect x="199.84" y="287.6" width="6.3" height="24.7" fill="#fbbc04"/>
<rect x="199.84" y="262.9" width="6.3" height="24.7" fill="#34a853"/>
<rect x="199.84" y="238.2" width="6.3" height="24.7" fill="#ff6d01"/>
<path d="M199.84 238.2V215Q199.84 213.5 201.34 213.5H204.64Q206.14 213.5 206.14 215V238.2Z" fill="#46bdc6"/>
<rect x="209.18" y="312.3" width="6.3" height="24.7" fill="#fbbc04"/>
<rect x="209.18" y="287.6" width="6.3" height="24.7" fill="#34a853"/>
<rect x="209.18" y="262.9" width="6.3" height="24.7" fill="#ff6d01"/>
<path d="M209.18 262.9V239.7Q209.18 238.2 210.68 238.2H213.98Q215.48 238.2 215.48 239.7V262.9Z" fill="#46bdc6"/>
<rect x="218.53" y="312.3" width="6.3" height="24.7" fill="#fbbc04"/>
<rect x="227.87" y="312.3" width="6.3" height="24.7" fill="#fbbc04"/>
<rect x="237.22" y="312.3" width="6.3" height="24.7" fill="#4285f4"/>
<rect x="246.56" y="312.3" width="6.3" height="24.7" fill="#fbbc04"/>
<path d="M246.56 312.3V289.1Q246.56 287.6 248.06 287.6H251.36Q252.86 287.6 252.86 289.1V312.3Z" fill="#46bdc6"/>
<rect x="255.9" y="312.3" width="6.3" height="24.7" fill="#4285f4"/>
<path d="M255.9 312.3V289.1Q255.9 287.6 257.4 287.6H260.7Q262.2 287.6 262.2 289.1V312.3Z" fill="#46bdc6"/>
<rect x="265.25" y="287.6" width="6.3" height="49.4" fill="#ff6d01"/>
<rect x="274.59" y="312.3" width="6.3" height="24.7" fill="#4285f4"/>
<rect x="274.59" y="287.6" width="6.3" height="24.7" fill="#ea4335"/>
<path d="M274.59 287.6V264.4Q274.59 262.9 276.09 262.9H279.39Q280.89 262.9 280.89 264.4V287.6Z" fill="#46bdc6"/>
<path d="M283.94 337V313.8Q283.94 312.3 285.44 312.3H288.74Q290.24 312.3 290.24 313.8V337Z" fill="#46bdc6"/>
<rect x="293.28" y="312.3" width="6.3" height="24.7" fill="#ea4335"/>
<rect x="293.28" y="287.6" width="6.3" height="24.7" fill="#ff6d01"/>
<path d="M293.28 287.6V264.4Q293.28 262.9 294.78 262.9H298.08Q299.58 262.9 299.58 264.4V287.6Z" fill="#46bdc6"/>
<rect x="302.62" y="312.3" width="6.3" height="24.7" fill="#ea4335"/>
<path d="M302.62 312.3V289.1Q302.62 287.6 304.12 287.6H307.42Q308.92 287.6 308.92 289.1V312.3Z" fill="#46bdc6"/>
<rect x="311.97" y="312.3" width="6.3" height="24.7" fill="#4285f4"/>
<rect x="311.97" y="287.6" width="6.3" height="24.7" fill="#34a853"/>
<path d="M321.31 337V313.8Q321.31 312.3 322.81 312.3H326.11Q327.61 312.3 327.61 313.8V337Z" fill="#46bdc6"/>
<rect x="330.66" y="287.6" width="6.3" height="49.4" fill="#ea4335"/>
<rect x="340" y="312.3" width="6.3" height="24.7" fill="#4285f4"/>
<rect x="340" y="287.6" width="6.3" height="24.7" fill="#ea4335"/>
<rect x="340" y="262.9" width="6.3" height="24.7" fill="#ff6d01"/>
<rect x="102.5" y="336.5" width="246.7" height="1" fill="#333"/>
<text transform="translate(112.05 342.1) rotate(-90)" font-size="10.55" fill="#222" stroke="#222" stroke-width="0.42" text-anchor="end">7/3/2023</text>
<text transform="translate(130.74 342.1) rotate(-90)" font-size="10.55" fill="#222" stroke="#222" stroke-width="0.42" text-anchor="end">7/17/2…</text>
<text transform="translate(149.43 342.1) rotate(-90)" font-size="10.55" fill="#222" stroke="#222" stroke-width="0.42" text-anchor="end">8/14/2…</text>
<text transform="translate(168.11 342.1) rotate(-90)" font-size="10.55" fill="#222" stroke="#222" stroke-width="0.42" text-anchor="end">8/28/2…</text>
<text transform="translate(186.8 342.1) rotate(-90)" font-size="10.55" fill="#222" stroke="#222" stroke-width="0.42" text-anchor="end">9/25/2…</text>
<text transform="translate(205.49 342.1) rotate(-90)" font-size="10.55" fill="#222" stroke="#222" stroke-width="0.42" text-anchor="end">10/16/…</text>
<text transform="translate(224.18 342.1) rotate(-90)" font-size="10.55" fill="#222" stroke="#222" stroke-width="0.42" text-anchor="end">11/13/…</text>
<text transform="translate(242.87 342.1) rotate(-90)" font-size="10.55" fill="#222" stroke="#222" stroke-width="0.42" text-anchor="end">12/4/2…</text>
<text transform="translate(261.55 342.1) rotate(-90)" font-size="10.55" fill="#222" stroke="#222" stroke-width="0.42" text-anchor="end">12/18/…</text>
<text transform="translate(280.24 342.1) rotate(-90)" font-size="10.55" fill="#222" stroke="#222" stroke-width="0.42" text-anchor="end">1/1/2024</text>
<text transform="translate(298.93 342.1) rotate(-90)" font-size="10.55" fill="#222" stroke="#222" stroke-width="0.42" text-anchor="end">1/15/2…</text>
<text transform="translate(317.62 342.1) rotate(-90)" font-size="10.55" fill="#222" stroke="#222" stroke-width="0.42" text-anchor="end">1/29/2…</text>
<text transform="translate(336.31 342.1) rotate(-90)" font-size="10.55" fill="#222" stroke="#222" stroke-width="0.42" text-anchor="end">2/19/2…</text>
<text transform="translate(62.3 297.5) rotate(-90)" font-size="10.55" fill="#222" stroke="#222" stroke-width="0.4" text-anchor="middle"># Completed</text>
<text transform="translate(225.4 411) rotate(0.03)" font-size="10.55" fill="#222" stroke="#222" stroke-width="0.3" text-anchor="middle">Week Completed</text>
<rect x="362.8" y="208.5" width="10.7" height="10.6" rx="1.3" fill="#46bdc6"/>
<text transform="translate(380.8 217.2) rotate(0.03)" font-size="10.55" fill="#222" stroke="#222" stroke-width="0.3">Tool Hygeine</text>
<rect x="362.8" y="228" width="10.7" height="10.6" rx="1.3" fill="#ff6d01"/>
<text transform="translate(380.8 236.7) rotate(0.03)" font-size="10.55" fill="#222" stroke="#222" stroke-width="0.3">Special Project</text>
<rect x="362.8" y="247.5" width="10.7" height="10.6" rx="1.3" fill="#34a853"/>
<text transform="translate(380.8 256.2) rotate(0.03)" font-size="10.55" fill="#222" stroke="#222" stroke-width="0.3">Reporting</text>
<rect x="362.8" y="267" width="10.7" height="10.6" rx="1.3" fill="#fbbc04"/>
<text transform="translate(380.8 275.7) rotate(0.03)" font-size="10.55" fill="#222" stroke="#222" stroke-width="0.3">Project Completion</text>
<rect x="362.8" y="286.5" width="10.7" height="10.6" rx="1.3" fill="#ea4335"/>
<text transform="translate(380.8 295.2) rotate(0.03)" font-size="10.55" fill="#222" stroke="#222" stroke-width="0.3">Increased Efficiency</text>
<rect x="362.8" y="306" width="10.7" height="10.6" rx="1.3" fill="#4285f4"/>
<text transform="translate(380.8 315.1) rotate(0.03)" font-size="10.55" fill="#222" stroke="#222" stroke-width="0.3">Improved</text>
<text transform="translate(380.8 325.6) rotate(0.03)" font-size="10.55" fill="#222" stroke="#222" stroke-width="0.3">Profitability</text>
<rect x="501.2" y="147.5" width="452" height="279.8" fill="#fff" stroke="#adadad" stroke-width="1.15"/>
<text transform="translate(516.1 175.9) rotate(0.03)" font-size="17.67" fill="#757575" stroke="#757575" stroke-width="0.3">Task Priority Completed</text>
<text transform="translate(516.1 196.3) rotate(0.03)" font-size="12.3" fill="#999" stroke="#999" stroke-width="0.3">by Week</text>
<text transform="translate(559.4 344.35) rotate(0.03)" font-size="10.55" fill="#222" stroke="#222" stroke-width="0.3" text-anchor="end">0</text>
<rect x="564.9" y="319.27" width="373.8" height="1" fill="#ccc"/>
<text transform="translate(559.4 322.82) rotate(0.03)" font-size="10.55" fill="#222" stroke="#222" stroke-width="0.3" text-anchor="end">1</text>
<rect x="564.9" y="297.74" width="373.8" height="1" fill="#ccc"/>
<text transform="translate(559.4 301.29) rotate(0.03)" font-size="10.55" fill="#222" stroke="#222" stroke-width="0.3" text-anchor="end">2</text>
<rect x="564.9" y="276.21" width="373.8" height="1" fill="#ccc"/>
<text transform="translate(559.4 279.76) rotate(0.03)" font-size="10.55" fill="#222" stroke="#222" stroke-width="0.3" text-anchor="end">3</text>
<rect x="564.9" y="254.68" width="373.8" height="1" fill="#ccc"/>
<text transform="translate(559.4 258.23) rotate(0.03)" font-size="10.55" fill="#222" stroke="#222" stroke-width="0.3" text-anchor="end">4</text>
<rect x="564.9" y="233.15" width="373.8" height="1" fill="#ccc"/>
<text transform="translate(559.4 236.7) rotate(0.03)" font-size="10.55" fill="#222" stroke="#222" stroke-width="0.3" text-anchor="end">5</text>
<rect x="569.9" y="319.77" width="8.8" height="21.53" fill="#4285f4"/>
<path d="M569.9 319.77V299.74Q569.9 298.24 571.4 298.24H577.2Q578.7 298.24 578.7 299.74V319.77Z" fill="#ff6d01"/>
<rect x="584.1" y="319.77" width="8.8" height="21.53" fill="#ea4335"/>
<rect x="584.1" y="298.24" width="8.8" height="21.53" fill="#fbbc04"/>
<path d="M598.3 341.3V299.74Q598.3 298.24 599.8 298.24H605.6Q607.1 298.24 607.1 299.74V341.3Z" fill="#ff6d01"/>
<rect x="612.5" y="298.24" width="8.8" height="43.06" fill="#4285f4"/>
<rect x="612.5" y="276.71" width="8.8" height="21.53" fill="#fbbc04"/>
<rect x="626.7" y="319.77" width="8.8" height="21.53" fill="#ea4335"/>
<rect x="626.7" y="276.71" width="8.8" height="43.06" fill="#34a853"/>
<path d="M626.7 276.71V256.68Q626.7 255.18 628.2 255.18H634Q635.5 255.18 635.5 256.68V276.71Z" fill="#ff6d01"/>
<rect x="640.9" y="319.77" width="8.8" height="21.53" fill="#4285f4"/>
<rect x="640.9" y="298.24" width="8.8" height="21.53" fill="#34a853"/>
<path d="M640.9 298.24V278.21Q640.9 276.71 642.4 276.71H648.2Q649.7 276.71 649.7 278.21V298.24Z" fill="#ff6d01"/>
<rect x="655.1" y="319.77" width="8.8" height="21.53" fill="#4285f4"/>
<rect x="655.1" y="298.24" width="8.8" height="21.53" fill="#fbbc04"/>
<rect x="655.1" y="276.71" width="8.8" height="21.53" fill="#34a853"/>
<rect x="669.3" y="319.77" width="8.8" height="21.53" fill="#ea4335"/>
<rect x="669.3" y="298.24" width="8.8" height="21.53" fill="#34a853"/>
<path d="M669.3 298.24V256.68Q669.3 255.18 670.8 255.18H676.6Q678.1 255.18 678.1 256.68V298.24Z" fill="#ff6d01"/>
<rect x="683.5" y="298.24" width="8.8" height="43.06" fill="#4285f4"/>
<rect x="697.7" y="319.77" width="8.8" height="21.53" fill="#fbbc04"/>
<rect x="711.9" y="298.24" width="8.8" height="43.06" fill="#4285f4"/>
<rect x="711.9" y="276.71" width="8.8" height="21.53" fill="#ea4335"/>
<path d="M711.9 276.71V235.15Q711.9 233.65 713.4 233.65H719.2Q720.7 233.65 720.7 235.15V276.71Z" fill="#ff6d01"/>
<rect x="726.1" y="319.77" width="8.8" height="21.53" fill="#ea4335"/>
<rect x="726.1" y="298.24" width="8.8" height="21.53" fill="#fbbc04"/>
<rect x="726.1" y="255.18" width="8.8" height="43.06" fill="#34a853"/>
<path d="M740.3 341.3V321.27Q740.3 319.77 741.8 319.77H747.6Q749.1 319.77 749.1 321.27V341.3Z" fill="#ff6d01"/>
<path d="M754.5 341.3V321.27Q754.5 319.77 756 319.77H761.8Q763.3 319.77 763.3 321.27V341.3Z" fill="#ff6d01"/>
<rect x="768.7" y="319.77" width="8.8" height="21.53" fill="#4285f4"/>
<rect x="782.9" y="319.77" width="8.8" height="21.53" fill="#4285f4"/>
<rect x="782.9" y="298.24" width="8.8" height="21.53" fill="#fbbc04"/>
<rect x="797.1" y="319.77" width="8.8" height="21.53" fill="#ea4335"/>
<path d="M797.1 319.77V299.74Q797.1 298.24 798.6 298.24H804.4Q805.9 298.24 805.9 299.74V319.77Z" fill="#ff6d01"/>
<rect x="811.3" y="319.77" width="8.8" height="21.53" fill="#4285f4"/>
<path d="M811.3 319.77V299.74Q811.3 298.24 812.8 298.24H818.6Q820.1 298.24 820.1 299.74V319.77Z" fill="#ff6d01"/>
<rect x="825.5" y="319.77" width="8.8" height="21.53" fill="#4285f4"/>
<rect x="825.5" y="298.24" width="8.8" height="21.53" fill="#ea4335"/>
<rect x="825.5" y="276.71" width="8.8" height="21.53" fill="#fbbc04"/>
<path d="M839.7 341.3V321.27Q839.7 319.77 841.2 319.77H847Q848.5 319.77 848.5 321.27V341.3Z" fill="#ff6d01"/>
<rect x="853.9" y="298.24" width="8.8" height="43.06" fill="#34a853"/>
<path d="M853.9 298.24V278.21Q853.9 276.71 855.4 276.71H861.2Q862.7 276.71 862.7 278.21V298.24Z" fill="#ff6d01"/>
<rect x="868.1" y="298.24" width="8.8" height="43.06" fill="#4285f4"/>
<rect x="882.3" y="319.77" width="8.8" height="21.53" fill="#ea4335"/>
<rect x="882.3" y="298.24" width="8.8" height="21.53" fill="#fbbc04"/>
<path d="M896.5 341.3V321.27Q896.5 319.77 898 319.77H903.8Q905.3 319.77 905.3 321.27V341.3Z" fill="#ff6d01"/>
<rect x="910.7" y="319.77" width="8.8" height="21.53" fill="#4285f4"/>
<path d="M910.7 319.77V299.74Q910.7 298.24 912.2 298.24H918Q919.5 298.24 919.5 299.74V319.77Z" fill="#ff6d01"/>
<rect x="924.9" y="319.77" width="8.8" height="21.53" fill="#4285f4"/>
<rect x="924.9" y="298.24" width="8.8" height="21.53" fill="#ea4335"/>
<rect x="924.9" y="276.71" width="8.8" height="21.53" fill="#fbbc04"/>
<rect x="564.9" y="340.8" width="373.8" height="1" fill="#333"/>
<text transform="translate(577.9 346.8) rotate(-90)" font-size="10.55" fill="#222" stroke="#222" stroke-width="0.42" text-anchor="end">7/3/2…</text>
<text transform="translate(592.1 346.8) rotate(-90)" font-size="10.55" fill="#222" stroke="#222" stroke-width="0.42" text-anchor="end">7/10/…</text>
<text transform="translate(606.3 346.8) rotate(-90)" font-size="10.55" fill="#222" stroke="#222" stroke-width="0.42" text-anchor="end">7/17/…</text>
<text transform="translate(620.5 346.8) rotate(-90)" font-size="10.55" fill="#222" stroke="#222" stroke-width="0.42" text-anchor="end">7/24/…</text>
<text transform="translate(634.7 346.8) rotate(-90)" font-size="10.55" fill="#222" stroke="#222" stroke-width="0.42" text-anchor="end">8/14/…</text>
<text transform="translate(648.9 346.8) rotate(-90)" font-size="10.55" fill="#222" stroke="#222" stroke-width="0.42" text-anchor="end">8/21/…</text>
<text transform="translate(663.1 346.8) rotate(-90)" font-size="10.55" fill="#222" stroke="#222" stroke-width="0.42" text-anchor="end">8/28/…</text>
<text transform="translate(677.3 346.8) rotate(-90)" font-size="10.55" fill="#222" stroke="#222" stroke-width="0.42" text-anchor="end">9/11/2…</text>
<text transform="translate(691.5 346.8) rotate(-90)" font-size="10.55" fill="#222" stroke="#222" stroke-width="0.42" text-anchor="end">9/25/…</text>
<text transform="translate(705.7 346.8) rotate(-90)" font-size="10.55" fill="#222" stroke="#222" stroke-width="0.42" text-anchor="end">10/2/…</text>
<text transform="translate(719.9 346.8) rotate(-90)" font-size="10.55" fill="#222" stroke="#222" stroke-width="0.42" text-anchor="end">10/16…</text>
<text transform="translate(734.1 346.8) rotate(-90)" font-size="10.55" fill="#222" stroke="#222" stroke-width="0.42" text-anchor="end">11/6/2…</text>
<text transform="translate(748.3 346.8) rotate(-90)" font-size="10.55" fill="#222" stroke="#222" stroke-width="0.42" text-anchor="end">11/13/…</text>
<text transform="translate(762.5 346.8) rotate(-90)" font-size="10.55" fill="#222" stroke="#222" stroke-width="0.42" text-anchor="end">11/27/…</text>
<text transform="translate(776.7 346.8) rotate(-90)" font-size="10.55" fill="#222" stroke="#222" stroke-width="0.42" text-anchor="end">12/4/…</text>
<text transform="translate(790.9 346.8) rotate(-90)" font-size="10.55" fill="#222" stroke="#222" stroke-width="0.42" text-anchor="end">12/11/…</text>
<text transform="translate(805.1 346.8) rotate(-90)" font-size="10.55" fill="#222" stroke="#222" stroke-width="0.42" text-anchor="end">12/18…</text>
<text transform="translate(819.3 346.8) rotate(-90)" font-size="10.55" fill="#222" stroke="#222" stroke-width="0.42" text-anchor="end">12/25…</text>
<text transform="translate(833.5 346.8) rotate(-90)" font-size="10.55" fill="#222" stroke="#222" stroke-width="0.42" text-anchor="end">1/1/2…</text>
<text transform="translate(847.7 346.8) rotate(-90)" font-size="10.55" fill="#222" stroke="#222" stroke-width="0.42" text-anchor="end">1/8/2…</text>
<text transform="translate(861.9 346.8) rotate(-90)" font-size="10.55" fill="#222" stroke="#222" stroke-width="0.42" text-anchor="end">1/15/…</text>
<text transform="translate(876.1 346.8) rotate(-90)" font-size="10.55" fill="#222" stroke="#222" stroke-width="0.42" text-anchor="end">1/22/…</text>
<text transform="translate(890.3 346.8) rotate(-90)" font-size="10.55" fill="#222" stroke="#222" stroke-width="0.42" text-anchor="end">1/29/…</text>
<text transform="translate(904.5 346.8) rotate(-90)" font-size="10.55" fill="#222" stroke="#222" stroke-width="0.42" text-anchor="end">2/12/…</text>
<text transform="translate(918.7 346.8) rotate(-90)" font-size="10.55" fill="#222" stroke="#222" stroke-width="0.42" text-anchor="end">2/19/…</text>
<text transform="translate(932.9 346.8) rotate(-90)" font-size="10.55" fill="#222" stroke="#222" stroke-width="0.42" text-anchor="end">2/26/…</text>
<text transform="translate(523.4 308.2) rotate(-90)" font-size="10.55" fill="#222" stroke="#222" stroke-width="0.4" text-anchor="middle"># Completed</text>
<text transform="translate(751.8 411) rotate(0.03)" font-size="10.55" fill="#222" stroke="#222" stroke-width="0.3" text-anchor="middle">Week Completed</text>
<rect x="582.8" y="208.4" width="10.7" height="10.6" rx="1.3" fill="#ff6d01"/>
<text transform="translate(600.9 217.1) rotate(0.03)" font-size="10.55" fill="#222" stroke="#222" stroke-width="0.3">Top</text>
<rect x="632" y="208.4" width="10.7" height="10.6" rx="1.3" fill="#34a853"/>
<text transform="translate(650.1 217.1) rotate(0.03)" font-size="10.55" fill="#222" stroke="#222" stroke-width="0.3">Recurring</text>
<rect x="710.2" y="208.4" width="10.7" height="10.6" rx="1.3" fill="#fbbc04"/>
<text transform="translate(728.3 217.1) rotate(0.03)" font-size="10.55" fill="#222" stroke="#222" stroke-width="0.3">Medium</text>
<rect x="779.8" y="208.4" width="10.7" height="10.6" rx="1.3" fill="#ea4335"/>
<text transform="translate(797.9 217.1) rotate(0.03)" font-size="10.55" fill="#222" stroke="#222" stroke-width="0.3">Low</text>
<rect x="831.2" y="208.4" width="10.7" height="10.6" rx="1.3" fill="#4285f4"/>
<text transform="translate(849.3 217.1) rotate(0.03)" font-size="10.55" fill="#222" stroke="#222" stroke-width="0.3">High</text>
<rect x="963.4" y="147.5" width="452" height="279.8" fill="#fff" stroke="#adadad" stroke-width="1.15"/>
<text transform="translate(978.3 175.9) rotate(0.03)" font-size="17.67" fill="#757575" stroke="#757575" stroke-width="0.3">Type Completed</text>
<text transform="translate(978.3 196.3) rotate(0.03)" font-size="12.3" fill="#999" stroke="#999" stroke-width="0.3">by Week</text>
<text transform="translate(1021.6 344.35) rotate(0.03)" font-size="10.55" fill="#222" stroke="#222" stroke-width="0.3" text-anchor="end">0</text>
<rect x="1027.1" y="319.27" width="373.8" height="1" fill="#ccc"/>
<text transform="translate(1021.6 322.82) rotate(0.03)" font-size="10.55" fill="#222" stroke="#222" stroke-width="0.3" text-anchor="end">1</text>
<rect x="1027.1" y="297.74" width="373.8" height="1" fill="#ccc"/>
<text transform="translate(1021.6 301.29) rotate(0.03)" font-size="10.55" fill="#222" stroke="#222" stroke-width="0.3" text-anchor="end">2</text>
<rect x="1027.1" y="276.21" width="373.8" height="1" fill="#ccc"/>
<text transform="translate(1021.6 279.76) rotate(0.03)" font-size="10.55" fill="#222" stroke="#222" stroke-width="0.3" text-anchor="end">3</text>
<rect x="1027.1" y="254.68" width="373.8" height="1" fill="#ccc"/>
<text transform="translate(1021.6 258.23) rotate(0.03)" font-size="10.55" fill="#222" stroke="#222" stroke-width="0.3" text-anchor="end">4</text>
<rect x="1027.1" y="233.15" width="373.8" height="1" fill="#ccc"/>
<text transform="translate(1021.6 236.7) rotate(0.03)" font-size="10.55" fill="#222" stroke="#222" stroke-width="0.3" text-anchor="end">5</text>
<rect x="1032.1" y="298.24" width="8.8" height="43.06" fill="#ea4335"/>
<rect x="1046.3" y="319.77" width="8.8" height="21.53" fill="#4285f4"/>
<rect x="1046.3" y="298.24" width="8.8" height="21.53" fill="#ea4335"/>
<rect x="1060.5" y="298.24" width="8.8" height="43.06" fill="#4285f4"/>
<rect x="1074.7" y="319.77" width="8.8" height="21.53" fill="#4285f4"/>
<rect x="1074.7" y="276.71" width="8.8" height="43.06" fill="#ea4335"/>
<rect x="1088.9" y="319.77" width="8.8" height="21.53" fill="#4285f4"/>
<rect x="1088.9" y="298.24" width="8.8" height="21.53" fill="#ea4335"/>
<path d="M1088.9 298.24V256.68Q1088.9 255.18 1090.4 255.18H1096.2Q1097.7 255.18 1097.7 256.68V298.24Z" fill="#fbbc04"/>
<rect x="1103.1" y="319.77" width="8.8" height="21.53" fill="#4285f4"/>
<rect x="1103.1" y="298.24" width="8.8" height="21.53" fill="#ea4335"/>
<path d="M1103.1 298.24V278.21Q1103.1 276.71 1104.6 276.71H1110.4Q1111.9 276.71 1111.9 278.21V298.24Z" fill="#fbbc04"/>
<rect x="1117.3" y="298.24" width="8.8" height="43.06" fill="#4285f4"/>
<rect x="1117.3" y="276.71" width="8.8" height="21.53" fill="#ea4335"/>
<rect x="1131.5" y="319.77" width="8.8" height="21.53" fill="#4285f4"/>
<rect x="1131.5" y="298.24" width="8.8" height="21.53" fill="#ea4335"/>
<path d="M1131.5 298.24V256.68Q1131.5 255.18 1133 255.18H1138.8Q1140.3 255.18 1140.3 256.68V298.24Z" fill="#fbbc04"/>
<rect x="1145.7" y="298.24" width="8.8" height="43.06" fill="#ea4335"/>
<rect x="1159.9" y="319.77" width="8.8" height="21.53" fill="#ea4335"/>
<rect x="1174.1" y="255.18" width="8.8" height="86.12" fill="#4285f4"/>
<rect x="1174.1" y="233.65" width="8.8" height="21.53" fill="#ea4335"/>
<rect x="1188.3" y="319.77" width="8.8" height="21.53" fill="#4285f4"/>
<rect x="1188.3" y="276.71" width="8.8" height="43.06" fill="#ea4335"/>
<path d="M1188.3 276.71V256.68Q1188.3 255.18 1189.8 255.18H1195.6Q1197.1 255.18 1197.1 256.68V276.71Z" fill="#fbbc04"/>
<path d="M1202.5 341.3V321.27Q1202.5 319.77 1204 319.77H1209.8Q1211.3 319.77 1211.3 321.27V341.3Z" fill="#fbbc04"/>
<rect x="1216.7" y="319.77" width="8.8" height="21.53" fill="#ea4335"/>
<rect x="1230.9" y="319.77" width="8.8" height="21.53" fill="#4285f4"/>
<rect x="1245.1" y="298.24" width="8.8" height="43.06" fill="#ea4335"/>
<rect x="1259.3" y="319.77" width="8.8" height="21.53" fill="#4285f4"/>
<rect x="1259.3" y="298.24" width="8.8" height="21.53" fill="#ea4335"/>
<rect x="1273.5" y="298.24" width="8.8" height="43.06" fill="#4285f4"/>
<rect x="1287.7" y="319.77" width="8.8" height="21.53" fill="#4285f4"/>
<rect x="1287.7" y="276.71" width="8.8" height="43.06" fill="#ea4335"/>
<rect x="1301.9" y="319.77" width="8.8" height="21.53" fill="#4285f4"/>
<rect x="1316.1" y="319.77" width="8.8" height="21.53" fill="#ea4335"/>
<path d="M1316.1 319.77V278.21Q1316.1 276.71 1317.6 276.71H1323.4Q1324.9 276.71 1324.9 278.21V319.77Z" fill="#fbbc04"/>
<rect x="1330.3" y="319.77" width="8.8" height="21.53" fill="#4285f4"/>
<rect x="1330.3" y="298.24" width="8.8" height="21.53" fill="#ea4335"/>
<rect x="1344.5" y="298.24" width="8.8" height="43.06" fill="#ea4335"/>
<rect x="1358.7" y="319.77" width="8.8" height="21.53" fill="#ea4335"/>
<rect x="1372.9" y="298.24" width="8.8" height="43.06" fill="#4285f4"/>
<rect x="1387.1" y="298.24" width="8.8" height="43.06" fill="#4285f4"/>
<rect x="1387.1" y="276.71" width="8.8" height="21.53" fill="#ea4335"/>
<rect x="1027.1" y="340.8" width="373.8" height="1" fill="#333"/>
<text transform="translate(1040.1 346.8) rotate(-90)" font-size="10.55" fill="#222" stroke="#222" stroke-width="0.42" text-anchor="end">7/3/2…</text>
<text transform="translate(1054.3 346.8) rotate(-90)" font-size="10.55" fill="#222" stroke="#222" stroke-width="0.42" text-anchor="end">7/10/…</text>
<text transform="translate(1068.5 346.8) rotate(-90)" font-size="10.55" fill="#222" stroke="#222" stroke-width="0.42" text-anchor="end">7/17/…</text>
<text transform="translate(1082.7 346.8) rotate(-90)" font-size="10.55" fill="#222" stroke="#222" stroke-width="0.42" text-anchor="end">7/24/…</text>
<text transform="translate(1096.9 346.8) rotate(-90)" font-size="10.55" fill="#222" stroke="#222" stroke-width="0.42" text-anchor="end">8/14/…</text>
<text transform="translate(1111.1 346.8) rotate(-90)" font-size="10.55" fill="#222" stroke="#222" stroke-width="0.42" text-anchor="end">8/21/…</text>
<text transform="translate(1125.3 346.8) rotate(-90)" font-size="10.55" fill="#222" stroke="#222" stroke-width="0.42" text-anchor="end">8/28/…</text>
<text transform="translate(1139.5 346.8) rotate(-90)" font-size="10.55" fill="#222" stroke="#222" stroke-width="0.42" text-anchor="end">9/11/2…</text>
<text transform="translate(1153.7 346.8) rotate(-90)" font-size="10.55" fill="#222" stroke="#222" stroke-width="0.42" text-anchor="end">9/25/…</text>
<text transform="translate(1167.9 346.8) rotate(-90)" font-size="10.55" fill="#222" stroke="#222" stroke-width="0.42" text-anchor="end">10/2/…</text>
<text transform="translate(1182.1 346.8) rotate(-90)" font-size="10.55" fill="#222" stroke="#222" stroke-width="0.42" text-anchor="end">10/16…</text>
<text transform="translate(1196.3 346.8) rotate(-90)" font-size="10.55" fill="#222" stroke="#222" stroke-width="0.42" text-anchor="end">11/6/2…</text>
<text transform="translate(1210.5 346.8) rotate(-90)" font-size="10.55" fill="#222" stroke="#222" stroke-width="0.42" text-anchor="end">11/13/…</text>
<text transform="translate(1224.7 346.8) rotate(-90)" font-size="10.55" fill="#222" stroke="#222" stroke-width="0.42" text-anchor="end">11/27/…</text>
<text transform="translate(1238.9 346.8) rotate(-90)" font-size="10.55" fill="#222" stroke="#222" stroke-width="0.42" text-anchor="end">12/4/…</text>
<text transform="translate(1253.1 346.8) rotate(-90)" font-size="10.55" fill="#222" stroke="#222" stroke-width="0.42" text-anchor="end">12/11/…</text>
<text transform="translate(1267.3 346.8) rotate(-90)" font-size="10.55" fill="#222" stroke="#222" stroke-width="0.42" text-anchor="end">12/18…</text>
<text transform="translate(1281.5 346.8) rotate(-90)" font-size="10.55" fill="#222" stroke="#222" stroke-width="0.42" text-anchor="end">12/25…</text>
<text transform="translate(1295.7 346.8) rotate(-90)" font-size="10.55" fill="#222" stroke="#222" stroke-width="0.42" text-anchor="end">1/1/2…</text>
<text transform="translate(1309.9 346.8) rotate(-90)" font-size="10.55" fill="#222" stroke="#222" stroke-width="0.42" text-anchor="end">1/8/2…</text>
<text transform="translate(1324.1 346.8) rotate(-90)" font-size="10.55" fill="#222" stroke="#222" stroke-width="0.42" text-anchor="end">1/15/…</text>
<text transform="translate(1338.3 346.8) rotate(-90)" font-size="10.55" fill="#222" stroke="#222" stroke-width="0.42" text-anchor="end">1/22/…</text>
<text transform="translate(1352.5 346.8) rotate(-90)" font-size="10.55" fill="#222" stroke="#222" stroke-width="0.42" text-anchor="end">1/29/…</text>
<text transform="translate(1366.7 346.8) rotate(-90)" font-size="10.55" fill="#222" stroke="#222" stroke-width="0.42" text-anchor="end">2/12/…</text>
<text transform="translate(1380.9 346.8) rotate(-90)" font-size="10.55" fill="#222" stroke="#222" stroke-width="0.42" text-anchor="end">2/19/…</text>
<text transform="translate(1395.1 346.8) rotate(-90)" font-size="10.55" fill="#222" stroke="#222" stroke-width="0.42" text-anchor="end">2/26/…</text>
<text transform="translate(985.6 308.2) rotate(-90)" font-size="10.55" fill="#222" stroke="#222" stroke-width="0.4" text-anchor="middle"># Completed</text>
<text transform="translate(1214 411) rotate(0.03)" font-size="10.55" fill="#222" stroke="#222" stroke-width="0.3" text-anchor="middle">Week Completed</text>
<rect x="1061" y="208.4" width="10.7" height="10.6" rx="1.3" fill="#fbbc04"/>
<text transform="translate(1079.1 217.1) rotate(0.03)" font-size="10.55" fill="#222" stroke="#222" stroke-width="0.3">Weekly Recurring</text>
<rect x="1176.8" y="208.4" width="10.7" height="10.6" rx="1.3" fill="#ea4335"/>
<text transform="translate(1194.9 217.1) rotate(0.03)" font-size="10.55" fill="#222" stroke="#222" stroke-width="0.3">Unplanned</text>
<rect x="1260.5" y="208.4" width="10.7" height="10.6" rx="1.3" fill="#4285f4"/>
<text transform="translate(1278.6 217.1) rotate(0.03)" font-size="10.55" fill="#222" stroke="#222" stroke-width="0.3">Planned</text>
<rect x="38.5" y="439.8" width="452" height="279.8" fill="#fff" stroke="#adadad" stroke-width="1.15"/>
<text transform="translate(53.4 468.2) rotate(0.03)" font-size="17.67" fill="#757575" stroke="#757575" stroke-width="0.3">Task Focus Completed</text>
<text transform="translate(53.4 488.6) rotate(0.03)" font-size="12.3" fill="#999" stroke="#999" stroke-width="0.3">by Month</text>
<text transform="translate(97.4 639.15) rotate(0.03)" font-size="10.55" fill="#222" stroke="#222" stroke-width="0.3" text-anchor="end">0</text>
<rect x="102.5" y="609.48" width="246.7" height="1" fill="#ccc"/>
<text transform="translate(97.4 613.02) rotate(0.03)" font-size="10.55" fill="#222" stroke="#222" stroke-width="0.3" text-anchor="end">5</text>
<rect x="102.5" y="583.35" width="246.7" height="1" fill="#ccc"/>
<text transform="translate(97.4 586.9) rotate(0.03)" font-size="10.55" fill="#222" stroke="#222" stroke-width="0.3" text-anchor="end">10</text>
<rect x="102.5" y="557.23" width="246.7" height="1" fill="#ccc"/>
<text transform="translate(97.4 560.77) rotate(0.03)" font-size="10.55" fill="#222" stroke="#222" stroke-width="0.3" text-anchor="end">15</text>
<rect x="102.5" y="531.1" width="246.7" height="1" fill="#ccc"/>
<text transform="translate(97.4 534.65) rotate(0.03)" font-size="10.55" fill="#222" stroke="#222" stroke-width="0.3" text-anchor="end">20</text>
<rect x="102.5" y="504.98" width="246.7" height="1" fill="#ccc"/>
<text transform="translate(97.4 508.53) rotate(0.03)" font-size="10.55" fill="#222" stroke="#222" stroke-width="0.3" text-anchor="end">25</text>
<rect x="110.3" y="620.43" width="13" height="15.67" fill="#fbbc04"/>
<rect x="110.3" y="604.75" width="13" height="15.67" fill="#34a853"/>
<rect x="110.3" y="594.3" width="13" height="10.45" fill="#ff6d01"/>
<path d="M110.3 594.3V591.28Q110.3 589.08 112.5 589.08H121.1Q123.3 589.08 123.3 591.28V594.3Z" fill="#7baaf7"/>
<rect x="130.23" y="620.43" width="13" height="15.67" fill="#ea4335"/>
<rect x="130.23" y="609.98" width="13" height="10.45" fill="#fbbc04"/>
<rect x="130.23" y="599.52" width="13" height="10.45" fill="#34a853"/>
<rect x="130.23" y="594.3" width="13" height="5.22" fill="#46bdc6"/>
<path d="M130.23 594.3V586.05Q130.23 583.85 132.43 583.85H141.03Q143.23 583.85 143.23 586.05V594.3Z" fill="#7baaf7"/>
<rect x="150.16" y="630.88" width="13" height="5.22" fill="#fbbc04"/>
<rect x="150.16" y="625.65" width="13" height="5.22" fill="#34a853"/>
<rect x="150.16" y="620.43" width="13" height="5.22" fill="#ff6d01"/>
<rect x="150.16" y="615.2" width="13" height="5.22" fill="#46bdc6"/>
<path d="M150.16 615.2V606.95Q150.16 604.75 152.36 604.75H160.96Q163.16 604.75 163.16 606.95V615.2Z" fill="#7baaf7"/>
<rect x="170.09" y="630.88" width="13" height="5.22" fill="#ea4335"/>
<rect x="170.09" y="625.65" width="13" height="5.22" fill="#fbbc04"/>
<rect x="170.09" y="620.43" width="13" height="5.22" fill="#34a853"/>
<rect x="170.09" y="615.2" width="13" height="5.22" fill="#ff6d01"/>
<rect x="170.09" y="609.98" width="13" height="5.22" fill="#46bdc6"/>
<path d="M170.09 609.98V606.95Q170.09 604.75 172.29 604.75H180.89Q183.09 604.75 183.09 606.95V609.98Z" fill="#7baaf7"/>
<rect x="190.02" y="625.65" width="13" height="10.45" fill="#34a853"/>
<rect x="190.02" y="620.43" width="13" height="5.22" fill="#ff6d01"/>
<rect x="190.02" y="615.2" width="13" height="5.22" fill="#46bdc6"/>
<path d="M190.02 615.2V612.18Q190.02 609.98 192.22 609.98H200.82Q203.02 609.98 203.02 612.18V615.2Z" fill="#7baaf7"/>
<rect x="209.95" y="620.43" width="13" height="15.67" fill="#ea4335"/>
<rect x="209.95" y="615.2" width="13" height="5.22" fill="#fbbc04"/>
<rect x="209.95" y="604.75" width="13" height="10.45" fill="#34a853"/>
<rect x="209.95" y="594.3" width="13" height="10.45" fill="#46bdc6"/>
<path d="M209.95 594.3V580.83Q209.95 578.62 212.15 578.62H220.75Q222.95 578.62 222.95 580.83V594.3Z" fill="#7baaf7"/>
<rect x="229.88" y="630.88" width="13" height="5.22" fill="#ea4335"/>
<rect x="229.88" y="620.43" width="13" height="10.45" fill="#fbbc04"/>
<rect x="229.88" y="615.2" width="13" height="5.22" fill="#46bdc6"/>
<path d="M229.88 615.2V601.73Q229.88 599.52 232.08 599.52H240.68Q242.88 599.52 242.88 601.73V615.2Z" fill="#7baaf7"/>
<rect x="249.81" y="630.88" width="13" height="5.22" fill="#ea4335"/>
<rect x="249.81" y="615.2" width="13" height="15.67" fill="#fbbc04"/>
<rect x="249.81" y="609.98" width="13" height="5.22" fill="#ff6d01"/>
<rect x="249.81" y="604.75" width="13" height="5.22" fill="#46bdc6"/>
<path d="M249.81 604.75V601.73Q249.81 599.52 252.01 599.52H260.61Q262.81 599.52 262.81 601.73V604.75Z" fill="#7baaf7"/>
<rect x="269.74" y="630.88" width="13" height="5.22" fill="#fbbc04"/>
<rect x="269.74" y="615.2" width="13" height="15.67" fill="#34a853"/>
<rect x="269.74" y="609.98" width="13" height="5.22" fill="#ff6d01"/>
<path d="M269.74 609.98V606.95Q269.74 604.75 271.94 604.75H280.54Q282.74 604.75 282.74 606.95V609.98Z" fill="#7baaf7"/>
<rect x="289.67" y="620.43" width="13" height="15.67" fill="#fbbc04"/>
<rect x="289.67" y="615.2" width="13" height="5.22" fill="#ff6d01"/>
<rect x="289.67" y="604.75" width="13" height="10.45" fill="#46bdc6"/>
<path d="M289.67 604.75V596.5Q289.67 594.3 291.87 594.3H300.47Q302.67 594.3 302.67 596.5V604.75Z" fill="#7baaf7"/>
<rect x="309.6" y="615.2" width="13" height="20.9" fill="#34a853"/>
<rect x="309.6" y="604.75" width="13" height="10.45" fill="#ff6d01"/>
<path d="M309.6 604.75V591.28Q309.6 589.08 311.8 589.08H320.4Q322.6 589.08 322.6 591.28V604.75Z" fill="#7baaf7"/>
<rect x="329.53" y="620.43" width="13" height="15.67" fill="#4285f4"/>
<rect x="329.53" y="615.2" width="13" height="5.22" fill="#ea4335"/>
<rect x="329.53" y="594.3" width="13" height="20.9" fill="#fbbc04"/>
<rect x="329.53" y="578.62" width="13" height="15.67" fill="#34a853"/>
<rect x="329.53" y="531.6" width="13" height="47.02" fill="#ff6d01"/>
<path d="M329.53 531.6V512.9Q329.53 510.7 331.73 510.7H340.33Q342.53 510.7 342.53 512.9V531.6Z" fill="#7baaf7"/>
<rect x="102.5" y="635.6" width="246.7" height="1" fill="#333"/>
<text transform="translate(121.8 648.5) rotate(-45)" font-size="10.55" fill="#222" stroke="#222" stroke-width="0.36" text-anchor="end">2023-Jul</text>
<text transform="translate(141.73 648.5) rotate(-45)" font-size="10.55" fill="#222" stroke="#222" stroke-width="0.36" text-anchor="end">2023-Aug</text>
<text transform="translate(161.66 648.5) rotate(-45)" font-size="10.55" fill="#222" stroke="#222" stroke-width="0.36" text-anchor="end">2023-Sep</text>
<text transform="translate(181.59 648.5) rotate(-45)" font-size="10.55" fill="#222" stroke="#222" stroke-width="0.36" text-anchor="end">2023-Oct</text>
<text transform="translate(201.52 648.5) rotate(-45)" font-size="10.55" fill="#222" stroke="#222" stroke-width="0.36" text-anchor="end">2023-Nov</text>
<text transform="translate(221.45 648.5) rotate(-45)" font-size="10.55" fill="#222" stroke="#222" stroke-width="0.36" text-anchor="end">2023-Dec</text>
<text transform="translate(241.38 648.5) rotate(-45)" font-size="10.55" fill="#222" stroke="#222" stroke-width="0.36" text-anchor="end">2024-Jan</text>
<text transform="translate(261.31 648.5) rotate(-45)" font-size="10.55" fill="#222" stroke="#222" stroke-width="0.36" text-anchor="end">2024-Feb</text>
<text transform="translate(281.24 648.5) rotate(-45)" font-size="10.55" fill="#222" stroke="#222" stroke-width="0.36" text-anchor="end">2024-Mar</text>
<text transform="translate(301.17 648.5) rotate(-45)" font-size="10.55" fill="#222" stroke="#222" stroke-width="0.36" text-anchor="end">2024-Apr</text>
<text transform="translate(321.1 648.5) rotate(-45)" font-size="10.55" fill="#222" stroke="#222" stroke-width="0.36" text-anchor="end">2024-May</text>
<text transform="translate(341.03 648.5) rotate(-45)" font-size="10.55" fill="#222" stroke="#222" stroke-width="0.36" text-anchor="end">2024-Jun</text>
<text transform="translate(62.3 589.5) rotate(-90)" font-size="10.55" fill="#222" stroke="#222" stroke-width="0.4" text-anchor="middle"># Completed</text>
<text transform="translate(226 703.3) rotate(0.03)" font-size="10.55" fill="#222" stroke="#222" stroke-width="0.3" text-anchor="middle">Month Completed</text>
<rect x="362.8" y="500.4" width="10.7" height="10.6" rx="1.3" fill="#7baaf7"/>
<text transform="translate(380.8 509.1) rotate(0.03)" font-size="10.55" fill="#222" stroke="#222" stroke-width="0.3">Tool Hygeine</text>
<rect x="362.8" y="519.9" width="10.7" height="10.6" rx="1.3" fill="#46bdc6"/>
<text transform="translate(380.8 528.6) rotate(0.03)" font-size="10.55" fill="#222" stroke="#222" stroke-width="0.3">Special Project</text>
<rect x="362.8" y="539.4" width="10.7" height="10.6" rx="1.3" fill="#ff6d01"/>
<text transform="translate(380.8 548.1) rotate(0.03)" font-size="10.55" fill="#222" stroke="#222" stroke-width="0.3">Reporting</text>
<rect x="362.8" y="558.9" width="10.7" height="10.6" rx="1.3" fill="#34a853"/>
<text transform="translate(380.8 567.6) rotate(0.03)" font-size="10.55" fill="#222" stroke="#222" stroke-width="0.3">Project Completion</text>
<rect x="362.8" y="578.4" width="10.7" height="10.6" rx="1.3" fill="#fbbc04"/>
<text transform="translate(380.8 587.1) rotate(0.03)" font-size="10.55" fill="#222" stroke="#222" stroke-width="0.3">Increased Efficiency</text>
<rect x="362.8" y="597.9" width="10.7" height="10.6" rx="1.3" fill="#ea4335"/>
<text transform="translate(380.8 607) rotate(0.03)" font-size="10.55" fill="#222" stroke="#222" stroke-width="0.3">Improved</text>
<text transform="translate(380.8 617.5) rotate(0.03)" font-size="10.55" fill="#222" stroke="#222" stroke-width="0.3">Profitability</text>
<rect x="362.8" y="627.9" width="10.7" height="10.6" rx="1.3" fill="#4285f4"/>
<text transform="translate(380.8 636.6) rotate(0.03)" font-size="10.55" fill="#222" stroke="#222" stroke-width="0.3">Enablement</text>
<rect x="501.2" y="439.8" width="452" height="279.8" fill="#fff" stroke="#adadad" stroke-width="1.15"/>
<text transform="translate(516.1 468.2) rotate(0.03)" font-size="17.67" fill="#757575" stroke="#757575" stroke-width="0.3">Task Priority Completed</text>
<text transform="translate(516.1 488.6) rotate(0.03)" font-size="12.3" fill="#999" stroke="#999" stroke-width="0.3">by Month</text>
<text transform="translate(559.4 639.2) rotate(0.03)" font-size="10.55" fill="#222" stroke="#222" stroke-width="0.3" text-anchor="end">0</text>
<rect x="564.9" y="613.61" width="373.8" height="1" fill="#ccc"/>
<text transform="translate(559.4 617.16) rotate(0.03)" font-size="10.55" fill="#222" stroke="#222" stroke-width="0.3" text-anchor="end">5</text>
<rect x="564.9" y="591.57" width="373.8" height="1" fill="#ccc"/>
<text transform="translate(559.4 595.12) rotate(0.03)" font-size="10.55" fill="#222" stroke="#222" stroke-width="0.3" text-anchor="end">10</text>
<rect x="564.9" y="569.53" width="373.8" height="1" fill="#ccc"/>
<text transform="translate(559.4 573.08) rotate(0.03)" font-size="10.55" fill="#222" stroke="#222" stroke-width="0.3" text-anchor="end">15</text>
<rect x="564.9" y="547.49" width="373.8" height="1" fill="#ccc"/>
<text transform="translate(559.4 551.04) rotate(0.03)" font-size="10.55" fill="#222" stroke="#222" stroke-width="0.3" text-anchor="end">20</text>
<rect x="564.9" y="525.45" width="373.8" height="1" fill="#ccc"/>
<text transform="translate(559.4 529) rotate(0.03)" font-size="10.55" fill="#222" stroke="#222" stroke-width="0.3" text-anchor="end">25</text>
<rect x="576.1" y="622.93" width="19.4" height="13.22" fill="#4285f4"/>
<rect x="576.1" y="618.52" width="19.4" height="4.41" fill="#ea4335"/>
<rect x="576.1" y="609.7" width="19.4" height="8.82" fill="#fbbc04"/>
<path d="M576.1 609.7V598.68Q576.1 596.48 578.3 596.48H593.3Q595.5 596.48 595.5 598.68V609.7Z" fill="#ff6d01"/>
<rect x="606.28" y="627.33" width="19.4" height="8.82" fill="#4285f4"/>
<rect x="606.28" y="622.93" width="19.4" height="4.41" fill="#ea4335"/>
<rect x="606.28" y="618.52" width="19.4" height="4.41" fill="#fbbc04"/>
<rect x="606.28" y="600.89" width="19.4" height="17.63" fill="#34a853"/>
<path d="M606.28 600.89V594.27Q606.28 592.07 608.48 592.07H623.48Q625.68 592.07 625.68 594.27V600.89Z" fill="#ff6d01"/>
<rect x="636.46" y="627.33" width="19.4" height="8.82" fill="#4285f4"/>
<rect x="636.46" y="622.93" width="19.4" height="4.41" fill="#ea4335"/>
<rect x="636.46" y="618.52" width="19.4" height="4.41" fill="#34a853"/>
<path d="M636.46 618.52V611.9Q636.46 609.7 638.66 609.7H653.66Q655.86 609.7 655.86 611.9V618.52Z" fill="#ff6d01"/>
<rect x="666.64" y="627.33" width="19.4" height="8.82" fill="#4285f4"/>
<rect x="666.64" y="622.93" width="19.4" height="4.41" fill="#ea4335"/>
<rect x="666.64" y="618.52" width="19.4" height="4.41" fill="#fbbc04"/>
<path d="M666.64 618.52V611.9Q666.64 609.7 668.84 609.7H683.84Q686.04 609.7 686.04 611.9V618.52Z" fill="#ff6d01"/>
<rect x="696.82" y="631.74" width="19.4" height="4.41" fill="#ea4335"/>
<rect x="696.82" y="627.33" width="19.4" height="4.41" fill="#fbbc04"/>
<rect x="696.82" y="618.52" width="19.4" height="8.82" fill="#34a853"/>
<path d="M696.82 618.52V616.31Q696.82 614.11 699.02 614.11H714.02Q716.22 614.11 716.22 616.31V618.52Z" fill="#ff6d01"/>
<rect x="727" y="618.52" width="19.4" height="17.63" fill="#4285f4"/>
<rect x="727" y="609.7" width="19.4" height="8.82" fill="#ea4335"/>
<rect x="727" y="600.89" width="19.4" height="8.82" fill="#fbbc04"/>
<path d="M727 600.89V589.86Q727 587.66 729.2 587.66H744.2Q746.4 587.66 746.4 589.86V600.89Z" fill="#ff6d01"/>
<rect x="757.18" y="627.33" width="19.4" height="8.82" fill="#4285f4"/>
<rect x="757.18" y="622.93" width="19.4" height="4.41" fill="#fbbc04"/>
<rect x="757.18" y="614.11" width="19.4" height="8.82" fill="#34a853"/>
<path d="M757.18 614.11V607.49Q757.18 605.29 759.38 605.29H774.38Q776.58 605.29 776.58 607.49V614.11Z" fill="#ff6d01"/>
<rect x="787.36" y="627.33" width="19.4" height="8.82" fill="#4285f4"/>
<rect x="787.36" y="618.52" width="19.4" height="8.82" fill="#ea4335"/>
<rect x="787.36" y="614.11" width="19.4" height="4.41" fill="#fbbc04"/>
<path d="M787.36 614.11V607.49Q787.36 605.29 789.56 605.29H804.56Q806.76 605.29 806.76 607.49V614.11Z" fill="#ff6d01"/>
<rect x="817.54" y="627.33" width="19.4" height="8.82" fill="#4285f4"/>
<rect x="817.54" y="618.52" width="19.4" height="8.82" fill="#34a853"/>
<path d="M817.54 618.52V611.9Q817.54 609.7 819.74 609.7H834.74Q836.94 609.7 836.94 611.9V618.52Z" fill="#ff6d01"/>
<rect x="847.72" y="627.33" width="19.4" height="8.82" fill="#4285f4"/>
<rect x="847.72" y="618.52" width="19.4" height="8.82" fill="#ea4335"/>
<rect x="847.72" y="609.7" width="19.4" height="8.82" fill="#fbbc04"/>
<path d="M847.72 609.7V603.09Q847.72 600.89 849.92 600.89H864.92Q867.12 600.89 867.12 603.09V609.7Z" fill="#ff6d01"/>
<rect x="877.9" y="627.33" width="19.4" height="8.82" fill="#4285f4"/>
<rect x="877.9" y="622.93" width="19.4" height="4.41" fill="#fbbc04"/>
<rect x="877.9" y="605.29" width="19.4" height="17.63" fill="#34a853"/>
<path d="M877.9 605.29V598.68Q877.9 596.48 880.1 596.48H895.1Q897.3 596.48 897.3 598.68V605.29Z" fill="#ff6d01"/>
<rect x="908.08" y="614.11" width="19.4" height="22.04" fill="#4285f4"/>
<rect x="908.08" y="600.89" width="19.4" height="13.22" fill="#ea4335"/>
<rect x="908.08" y="592.07" width="19.4" height="8.82" fill="#fbbc04"/>
<rect x="908.08" y="552.4" width="19.4" height="39.67" fill="#34a853"/>
<path d="M908.08 552.4V532.56Q908.08 530.36 910.28 530.36H925.28Q927.48 530.36 927.48 532.56V552.4Z" fill="#ff6d01"/>
<rect x="564.9" y="635.7" width="373.8" height="1" fill="#333"/>
<text transform="translate(590.8 648.5) rotate(-45)" font-size="10.55" fill="#222" stroke="#222" stroke-width="0.36" text-anchor="end">2023-Jul</text>
<text transform="translate(620.98 648.5) rotate(-45)" font-size="10.55" fill="#222" stroke="#222" stroke-width="0.36" text-anchor="end">2023-Aug</text>
<text transform="translate(651.16 648.5) rotate(-45)" font-size="10.55" fill="#222" stroke="#222" stroke-width="0.36" text-anchor="end">2023-Sep</text>
<text transform="translate(681.34 648.5) rotate(-45)" font-size="10.55" fill="#222" stroke="#222" stroke-width="0.36" text-anchor="end">2023-Oct</text>
<text transform="translate(711.52 648.5) rotate(-45)" font-size="10.55" fill="#222" stroke="#222" stroke-width="0.36" text-anchor="end">2023-Nov</text>
<text transform="translate(741.7 648.5) rotate(-45)" font-size="10.55" fill="#222" stroke="#222" stroke-width="0.36" text-anchor="end">2023-Dec</text>
<text transform="translate(771.88 648.5) rotate(-45)" font-size="10.55" fill="#222" stroke="#222" stroke-width="0.36" text-anchor="end">2024-Jan</text>
<text transform="translate(802.06 648.5) rotate(-45)" font-size="10.55" fill="#222" stroke="#222" stroke-width="0.36" text-anchor="end">2024-Feb</text>
<text transform="translate(832.24 648.5) rotate(-45)" font-size="10.55" fill="#222" stroke="#222" stroke-width="0.36" text-anchor="end">2024-Mar</text>
<text transform="translate(862.42 648.5) rotate(-45)" font-size="10.55" fill="#222" stroke="#222" stroke-width="0.36" text-anchor="end">2024-Apr</text>
<text transform="translate(892.6 648.5) rotate(-45)" font-size="10.55" fill="#222" stroke="#222" stroke-width="0.36" text-anchor="end">2024-May</text>
<text transform="translate(922.78 648.5) rotate(-45)" font-size="10.55" fill="#222" stroke="#222" stroke-width="0.36" text-anchor="end">2024-Jun</text>
<text transform="translate(524.5 599.5) rotate(-90)" font-size="10.55" fill="#222" stroke="#222" stroke-width="0.4" text-anchor="middle"># Completed</text>
<text transform="translate(751.8 703.3) rotate(0.03)" font-size="10.55" fill="#222" stroke="#222" stroke-width="0.3" text-anchor="middle">Week Completed</text>
<rect x="582.8" y="500.4" width="10.7" height="10.6" rx="1.3" fill="#ff6d01"/>
<text transform="translate(600.9 509.1) rotate(0.03)" font-size="10.55" fill="#222" stroke="#222" stroke-width="0.3">Top</text>
<rect x="632" y="500.4" width="10.7" height="10.6" rx="1.3" fill="#34a853"/>
<text transform="translate(650.1 509.1) rotate(0.03)" font-size="10.55" fill="#222" stroke="#222" stroke-width="0.3">Recurring</text>
<rect x="710.2" y="500.4" width="10.7" height="10.6" rx="1.3" fill="#fbbc04"/>
<text transform="translate(728.3 509.1) rotate(0.03)" font-size="10.55" fill="#222" stroke="#222" stroke-width="0.3">Medium</text>
<rect x="779.8" y="500.4" width="10.7" height="10.6" rx="1.3" fill="#ea4335"/>
<text transform="translate(797.9 509.1) rotate(0.03)" font-size="10.55" fill="#222" stroke="#222" stroke-width="0.3">Low</text>
<rect x="831.2" y="500.4" width="10.7" height="10.6" rx="1.3" fill="#4285f4"/>
<text transform="translate(849.3 509.1) rotate(0.03)" font-size="10.55" fill="#222" stroke="#222" stroke-width="0.3">High</text>
<rect x="963.4" y="439.8" width="452" height="279.8" fill="#fff" stroke="#adadad" stroke-width="1.15"/>
<text transform="translate(978.3 468.2) rotate(0.03)" font-size="17.67" fill="#757575" stroke="#757575" stroke-width="0.3">Type Completed</text>
<text transform="translate(978.3 488.6) rotate(0.03)" font-size="12.3" fill="#999" stroke="#999" stroke-width="0.3">by Month</text>
<text transform="translate(1021.6 639.2) rotate(0.03)" font-size="10.55" fill="#222" stroke="#222" stroke-width="0.3" text-anchor="end">0</text>
<rect x="1027.1" y="613.61" width="373.8" height="1" fill="#ccc"/>
<text transform="translate(1021.6 617.16) rotate(0.03)" font-size="10.55" fill="#222" stroke="#222" stroke-width="0.3" text-anchor="end">5</text>
<rect x="1027.1" y="591.57" width="373.8" height="1" fill="#ccc"/>
<text transform="translate(1021.6 595.12) rotate(0.03)" font-size="10.55" fill="#222" stroke="#222" stroke-width="0.3" text-anchor="end">10</text>
<rect x="1027.1" y="569.53" width="373.8" height="1" fill="#ccc"/>
<text transform="translate(1021.6 573.08) rotate(0.03)" font-size="10.55" fill="#222" stroke="#222" stroke-width="0.3" text-anchor="end">15</text>
<rect x="1027.1" y="547.49" width="373.8" height="1" fill="#ccc"/>
<text transform="translate(1021.6 551.04) rotate(0.03)" font-size="10.55" fill="#222" stroke="#222" stroke-width="0.3" text-anchor="end">20</text>
<rect x="1027.1" y="525.45" width="373.8" height="1" fill="#ccc"/>
<text transform="translate(1021.6 529) rotate(0.03)" font-size="10.55" fill="#222" stroke="#222" stroke-width="0.3" text-anchor="end">25</text>
<rect x="1038.3" y="618.52" width="19.4" height="17.63" fill="#ea4335"/>
<rect x="1038.3" y="596.48" width="19.4" height="22.04" fill="#fbbc04"/>
<rect x="1068.48" y="618.52" width="19.4" height="17.63" fill="#ea4335"/>
<rect x="1068.48" y="605.29" width="19.4" height="13.22" fill="#fbbc04"/>
<path d="M1068.48 605.29V594.27Q1068.48 592.07 1070.68 592.07H1085.68Q1087.88 592.07 1087.88 594.27V605.29Z" fill="#34a853"/>
<rect x="1098.66" y="631.74" width="19.4" height="4.41" fill="#ea4335"/>
<rect x="1098.66" y="618.52" width="19.4" height="13.22" fill="#fbbc04"/>
<path d="M1098.66 618.52V611.9Q1098.66 609.7 1100.86 609.7H1115.86Q1118.06 609.7 1118.06 611.9V618.52Z" fill="#34a853"/>
<rect x="1128.84" y="618.52" width="19.4" height="17.63" fill="#ea4335"/>
<rect x="1128.84" y="609.7" width="19.4" height="8.82" fill="#fbbc04"/>
<rect x="1159.02" y="631.74" width="19.4" height="4.41" fill="#ea4335"/>
<rect x="1159.02" y="622.93" width="19.4" height="8.82" fill="#fbbc04"/>
<path d="M1159.02 622.93V616.31Q1159.02 614.11 1161.22 614.11H1176.22Q1178.42 614.11 1178.42 616.31V622.93Z" fill="#34a853"/>
<rect x="1189.2" y="614.11" width="19.4" height="22.04" fill="#ea4335"/>
<rect x="1189.2" y="587.66" width="19.4" height="26.45" fill="#fbbc04"/>
<rect x="1219.38" y="627.33" width="19.4" height="8.82" fill="#ea4335"/>
<rect x="1219.38" y="614.11" width="19.4" height="13.22" fill="#fbbc04"/>
<path d="M1219.38 614.11V607.49Q1219.38 605.29 1221.58 605.29H1236.58Q1238.78 605.29 1238.78 607.49V614.11Z" fill="#34a853"/>
<rect x="1249.56" y="618.52" width="19.4" height="17.63" fill="#ea4335"/>
<rect x="1249.56" y="605.29" width="19.4" height="13.22" fill="#fbbc04"/>
<rect x="1279.74" y="631.74" width="19.4" height="4.41" fill="#ea4335"/>
<rect x="1279.74" y="618.52" width="19.4" height="13.22" fill="#fbbc04"/>
<path d="M1279.74 618.52V611.9Q1279.74 609.7 1281.94 609.7H1296.94Q1299.14 609.7 1299.14 611.9V618.52Z" fill="#34a853"/>
<rect x="1309.92" y="618.52" width="19.4" height="17.63" fill="#ea4335"/>
<rect x="1309.92" y="600.89" width="19.4" height="17.63" fill="#fbbc04"/>
<rect x="1340.1" y="627.33" width="19.4" height="8.82" fill="#ea4335"/>
<rect x="1340.1" y="614.11" width="19.4" height="13.22" fill="#fbbc04"/>
<path d="M1340.1 614.11V598.68Q1340.1 596.48 1342.3 596.48H1357.3Q1359.5 596.48 1359.5 598.68V614.11Z" fill="#34a853"/>
<rect x="1370.28" y="627.33" width="19.4" height="8.82" fill="#4285f4"/>
<rect x="1370.28" y="592.07" width="19.4" height="35.26" fill="#ea4335"/>
<rect x="1370.28" y="556.81" width="19.4" height="35.26" fill="#fbbc04"/>
<path d="M1370.28 556.81V532.56Q1370.28 530.36 1372.48 530.36H1387.48Q1389.68 530.36 1389.68 532.56V556.81Z" fill="#34a853"/>
<rect x="1027.1" y="635.7" width="373.8" height="1" fill="#333"/>
<text transform="translate(1053 648.5) rotate(-45)" font-size="10.55" fill="#222" stroke="#222" stroke-width="0.36" text-anchor="end">2023-Jul</text>
<text transform="translate(1083.18 648.5) rotate(-45)" font-size="10.55" fill="#222" stroke="#222" stroke-width="0.36" text-anchor="end">2023-Aug</text>
<text transform="translate(1113.36 648.5) rotate(-45)" font-size="10.55" fill="#222" stroke="#222" stroke-width="0.36" text-anchor="end">2023-Sep</text>
<text transform="translate(1143.54 648.5) rotate(-45)" font-size="10.55" fill="#222" stroke="#222" stroke-width="0.36" text-anchor="end">2023-Oct</text>
<text transform="translate(1173.72 648.5) rotate(-45)" font-size="10.55" fill="#222" stroke="#222" stroke-width="0.36" text-anchor="end">2023-Nov</text>
<text transform="translate(1203.9 648.5) rotate(-45)" font-size="10.55" fill="#222" stroke="#222" stroke-width="0.36" text-anchor="end">2023-Dec</text>
<text transform="translate(1234.08 648.5) rotate(-45)" font-size="10.55" fill="#222" stroke="#222" stroke-width="0.36" text-anchor="end">2024-Jan</text>
<text transform="translate(1264.26 648.5) rotate(-45)" font-size="10.55" fill="#222" stroke="#222" stroke-width="0.36" text-anchor="end">2024-Feb</text>
<text transform="translate(1294.44 648.5) rotate(-45)" font-size="10.55" fill="#222" stroke="#222" stroke-width="0.36" text-anchor="end">2024-Mar</text>
<text transform="translate(1324.62 648.5) rotate(-45)" font-size="10.55" fill="#222" stroke="#222" stroke-width="0.36" text-anchor="end">2024-Apr</text>
<text transform="translate(1354.8 648.5) rotate(-45)" font-size="10.55" fill="#222" stroke="#222" stroke-width="0.36" text-anchor="end">2024-May</text>
<text transform="translate(1384.98 648.5) rotate(-45)" font-size="10.55" fill="#222" stroke="#222" stroke-width="0.36" text-anchor="end">2024-Jun</text>
<text transform="translate(986.7 599.5) rotate(-90)" font-size="10.55" fill="#222" stroke="#222" stroke-width="0.4" text-anchor="middle"># Completed</text>
<text transform="translate(1214 703.3) rotate(0.03)" font-size="10.55" fill="#222" stroke="#222" stroke-width="0.3" text-anchor="middle">Week Completed</text>
<rect x="1001.8" y="500.4" width="10.7" height="10.6" rx="1.3" fill="#34a853"/>
<text transform="translate(1019.9 509.1) rotate(0.03)" font-size="10.55" fill="#222" stroke="#222" stroke-width="0.3">Weekly Recurring</text>
<rect x="1117.8" y="500.4" width="10.7" height="10.6" rx="1.3" fill="#fbbc04"/>
<text transform="translate(1135.9 509.1) rotate(0.03)" font-size="10.55" fill="#222" stroke="#222" stroke-width="0.3">Unplanned</text>
<rect x="1201.4" y="500.4" width="10.7" height="10.6" rx="1.3" fill="#ea4335"/>
<text transform="translate(1219.5 509.1) rotate(0.03)" font-size="10.55" fill="#222" stroke="#222" stroke-width="0.3">Planned</text>
<rect x="1272.3" y="500.4" width="10.7" height="10.6" rx="1.3" fill="#4285f4"/>
<text transform="translate(1290.4 509.1) rotate(0.03)" font-size="10.55" fill="#222" stroke="#222" stroke-width="0.3">Monthly Recurring</text>
</svg>
</div>
</body></html>
